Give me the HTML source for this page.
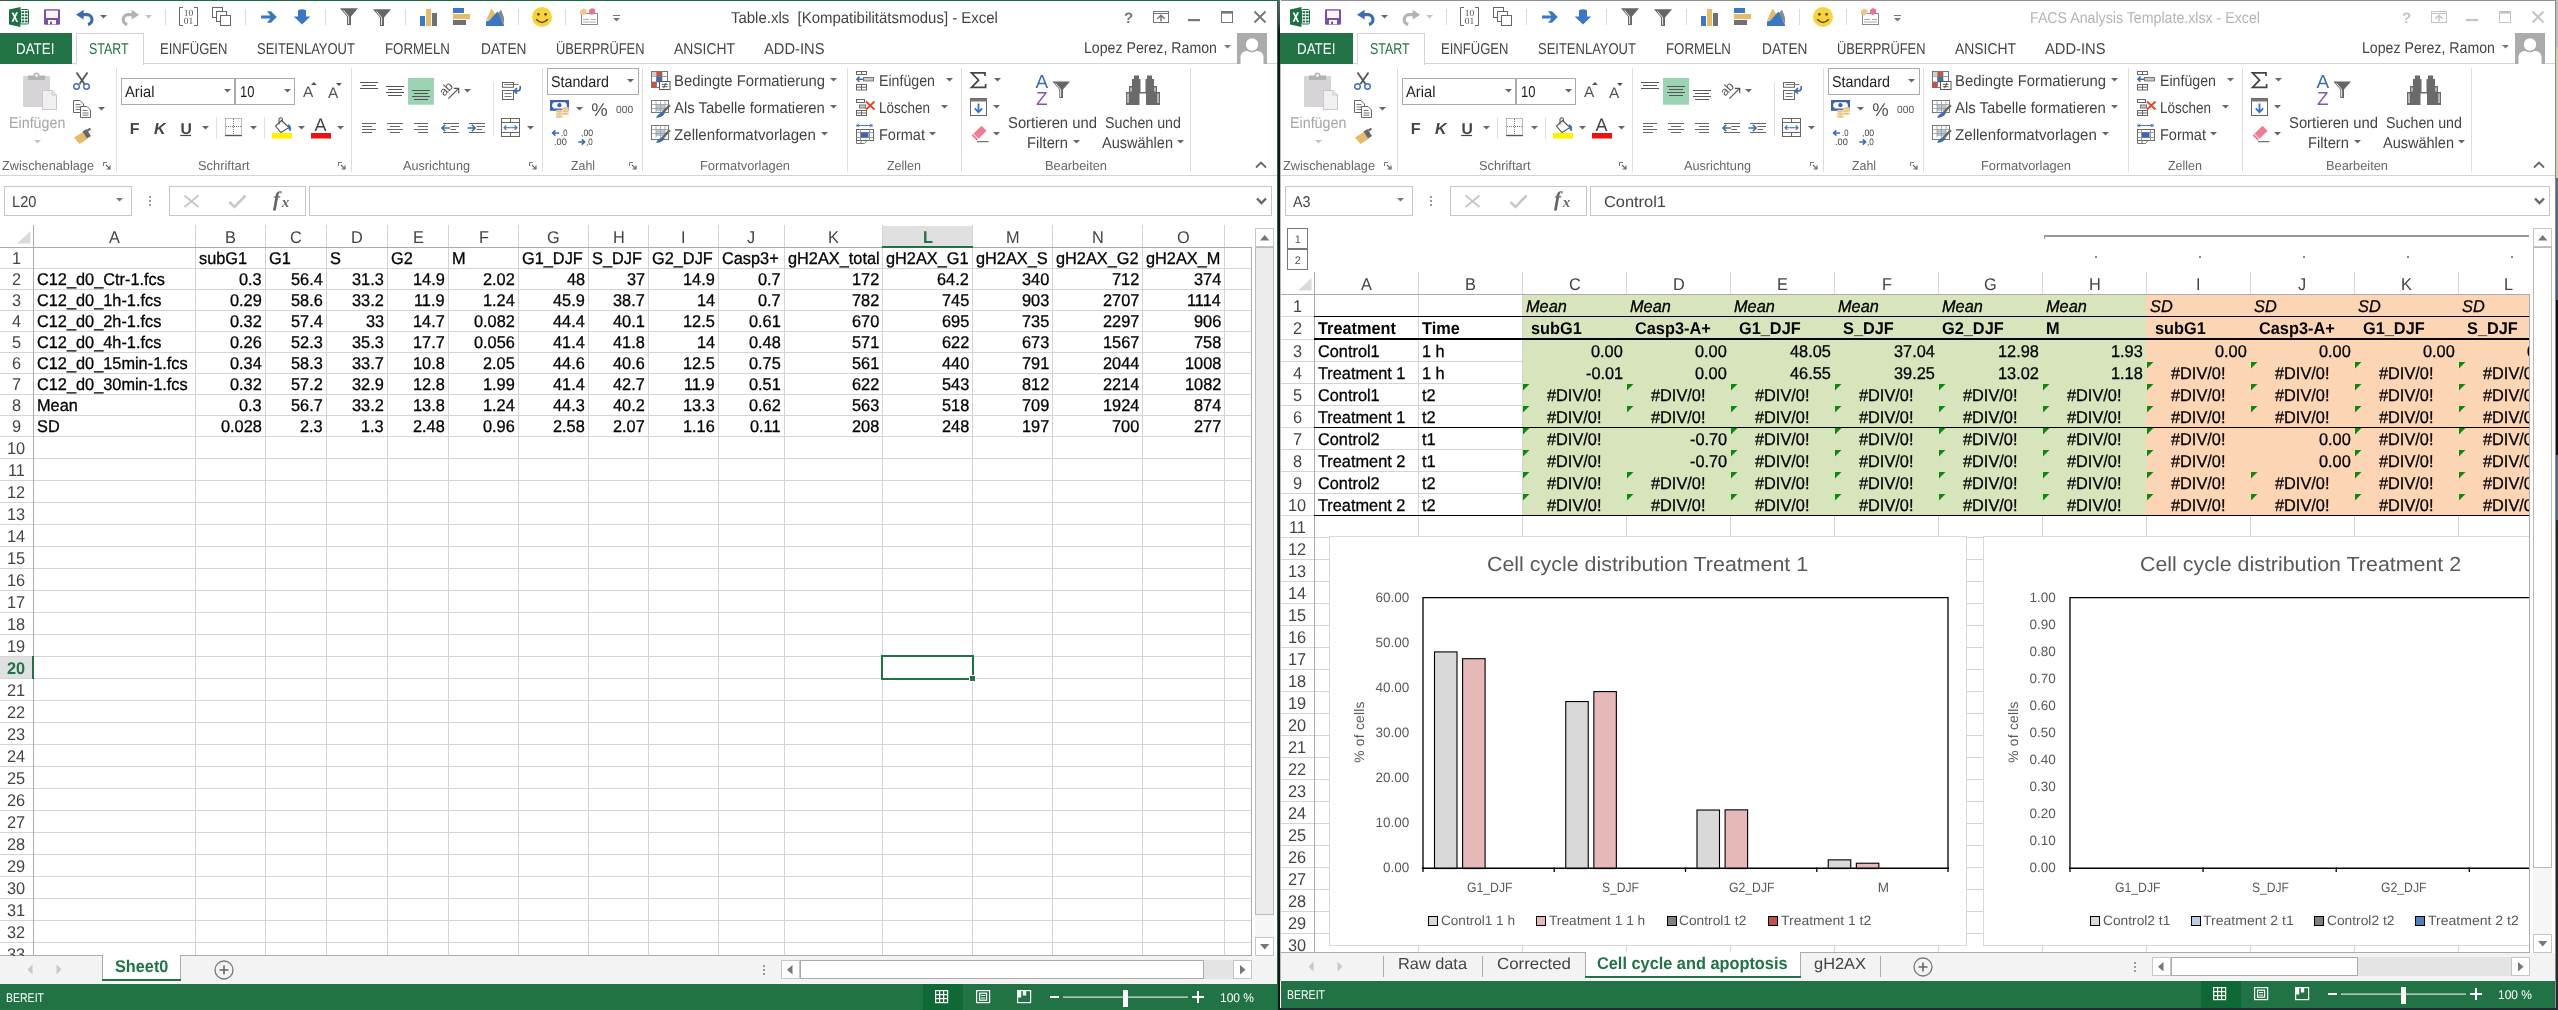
<!DOCTYPE html>
<html><head><meta charset="utf-8"><title>Excel</title><style>
html,body{margin:0;padding:0}
body{text-rendering:geometricPrecision;width:2558px;height:1010px;overflow:hidden;position:relative;background:#1f2b2c;font-family:"Liberation Sans",sans-serif;}
div,svg{position:absolute}
.t{white-space:pre;line-height:1;transform-origin:0 0;}
.k{-webkit-text-stroke:0.3px #000}
.win{overflow:hidden;background:#fff;will-change:transform}
</style></head>
<body>
<div style="left:2555px;top:0;width:3px;height:1010px;background:linear-gradient(180deg,#bdbdbd 0,#bdbdbd 47px,#c9d3a2 47px,#c9d3a2 178px,#5a7088 178px,#4a5f75 300px,#0e131b 300px,#0e131b 455px,#4f6e85 455px,#4f6e85 520px,#1d2a30 520px,#232e33 1010px)"></div>
<div class="win" style="left:0;top:0;width:1278px;height:1010px"><div style="left:0px;top:0px;width:1278px;height:1px;background:#1e6b41;"></div><svg style="left:0px;top:0px;" width="640" height="32" viewBox="0 0 640 32"><path d="M9 9.6L20.5 7V27L9 24.4Z" fill="#1d7044"/><rect x="20.5" y="9.5" width="8" height="14.5" rx="1.2" fill="#fff" stroke="#1d7044"/><rect x="21.6" y="11.2" width="2.6" height="1.9" fill="#1d7044"/><rect x="25" y="11.2" width="2.6" height="1.9" fill="#1d7044"/><rect x="21.6" y="14.3" width="2.6" height="1.9" fill="#1d7044"/><rect x="25" y="14.3" width="2.6" height="1.9" fill="#1d7044"/><rect x="21.6" y="17.4" width="2.6" height="1.9" fill="#1d7044"/><rect x="25" y="17.4" width="2.6" height="1.9" fill="#1d7044"/><rect x="21.6" y="20.5" width="2.6" height="1.9" fill="#1d7044"/><rect x="25" y="20.5" width="2.6" height="1.9" fill="#1d7044"/><path d="M11.6 12.4h1.9l1.3 2.9 1.3-3.1h1.9l-2.2 4.8 2.3 5h-1.9l-1.4-3.2-1.3 3h-1.9l2.2-4.7Z" fill="#fff"/><rect x="44" y="9.3" width="16" height="15.5" rx="1.2" fill="#7b4fa5"/><rect x="46" y="10.6" width="12" height="7.4" fill="#fbf3ff"/><rect x="48" y="20" width="8" height="4.3" fill="#fff"/><rect x="50" y="21.6" width="2" height="2.7" fill="#7b4fa5"/><path d="M76 14.7L83.6 9.8V19.6Z" fill="#3b6db0"/><path d="M82.5 14.7H87.6a4.9 4.9 0 0 1 0.3 9.7" fill="none" stroke="#3b6db0" stroke-width="3.2"/><path d="M100 15h7l-3.5 3.6Z" fill="#666"/><path d="M139.2 14.7L131.6 9.8V19.6Z" fill="#b3b3b3"/><path d="M132.7 14.7H127.6a4.9 4.9 0 0 0 -0.3 9.7" fill="none" stroke="#b3b3b3" stroke-width="3.2"/><path d="M145 15h7l-3.5 3.6Z" fill="#c4c4c4"/><rect x="165" y="9" width="1" height="16" fill="#dadada"/><rect x="245" y="9" width="1" height="16" fill="#dadada"/><rect x="325" y="9" width="1" height="16" fill="#dadada"/><rect x="405" y="9" width="1" height="16" fill="#dadada"/><rect x="518" y="9" width="1" height="16" fill="#dadada"/><rect x="565" y="9" width="1" height="16" fill="#dadada"/><path d="M183 7.5H179.5V25.5H183M194 7.5H197.5V25.5H194" fill="none" stroke="#666"/><text x="188.5" y="15.6" font-family="Liberation Serif" font-size="9.5" text-anchor="middle" fill="#555">10</text><text x="188.5" y="24" font-family="Liberation Serif" font-size="9.5" text-anchor="middle" fill="#555">01</text><rect x="212.5" y="7.5" width="10" height="10" fill="#fff" stroke="#666"/><rect x="216.5" y="11.5" width="10" height="10" fill="#fff" stroke="#666"/><rect x="220.5" y="15.5" width="10" height="10" fill="#fff" stroke="#666"/><path d="M261 15.4H270.3L267 11.3H271L276.8 17L271 22.7H267L270.3 18.6H261Z" fill="#3b78c3"/><path d="M298 10.2Q302 8.2 306 10.2V16.5H310.3L302 24.6L293.7 16.5H298Z" fill="#3b78c3"/><path d="M340 8.3H358L351 16.4V25H347V16.4Z" fill="#666"/><path d="M343.5 10.3L348.6 16.6V24" fill="none" stroke="#fff" stroke-width="0.9"/><path d="M373 9.3H391L384 17.4V26H380V17.4Z" fill="#666"/><path d="M376.5 11.3L381.6 17.6V25" fill="none" stroke="#fff" stroke-width="0.9"/><rect x="420" y="16" width="5" height="10" fill="#3b78c3"/><rect x="426" y="9" width="5" height="17" fill="#e8b96a"/><rect x="432" y="13" width="5" height="13" fill="#707070"/><rect x="453" y="8" width="11" height="5" fill="#3b78c3"/><rect x="453" y="14" width="17" height="5" fill="#e8b96a"/><rect x="453" y="20" width="13" height="5" fill="#707070"/><path d="M486 20.6L491.5 8.4L496.6 15.8L489.5 20Z" fill="#e8b96a"/><path d="M497.5 13.6L501.2 9.8L504 17.5V24Z" fill="#8a8a8a"/><path d="M486 26V21.6L489.6 20.2L497.4 11.6L504 25V26Z" fill="#3b78c3"/><circle cx="542" cy="17" r="10" fill="#f6d43a"/><circle cx="538.4" cy="14.3" r="1.4" fill="#5b4a16"/><circle cx="545.6" cy="14.3" r="1.4" fill="#5b4a16"/><path d="M536.2 19.3Q542 25.6 547.8 19.3" fill="none" stroke="#5b4a16" stroke-width="1.5"/><rect x="581.5" y="13.5" width="16" height="11" fill="#fff" stroke="#8a8a8a"/><path d="M583 19.5h6M591 19.5h5M583 22h13" stroke="#aaa"/><path d="M580 11l3-2.5 3.5 1v4l-3 2-3.5-1Z" fill="#e9c89a"/><path d="M589 10l3-2 3.2 1.6v3.4l-3.2 2-3-1.6Z" fill="#e8748f"/><path d="M613 15.5h7" stroke="#777"/><path d="M613 18h7l-3.5 3.6Z" fill="#777"/></svg><div class="t" style="left:731.2px;top:11px;font-size:15.8px;transform:scaleX(0.9472);color:#444;">Table.xls  [Kompatibilitätsmodus] - Excel</div><div class="t" style="left:1124px;top:11px;font-size:15px;font-weight:bold;color:#777;">?</div><svg style="left:0px;top:0px;" width="1277" height="32" viewBox="0 0 1277 32"><rect x="1153.5" y="11.5" width="15" height="11" fill="none" stroke="#777"/><path d="M1153.5 13.5h15" stroke="#777"/><path d="M1161 21.5V15.8M1157.3 18.8L1161 15.2L1164.7 18.8" fill="none" stroke="#777" stroke-width="1.5"/><rect x="1188" y="19" width="12" height="2.2" fill="#777"/><rect x="1221.5" y="12" width="11" height="10.5" fill="none" stroke="#777"/><rect x="1221" y="11" width="12" height="2.6" fill="#777"/><path d="M1254.5 11.5L1265.5 22.5M1265.5 11.5L1254.5 22.5" stroke="#777" stroke-width="1.9"/></svg><div style="left:0px;top:63px;width:1277px;height:1px;background:#d4d4d4;"></div><div style="left:-1px;top:33px;width:73px;height:31px;background:#217346;"></div><div class="t" style="left:15.9px;top:42px;font-size:15.7px;transform:scaleX(0.8519);color:#fff;">DATEI</div><div style="left:76px;top:33px;width:68px;height:32px;background:#fff;border:1px solid #d4d4d4;border-bottom:none;box-sizing:border-box;"></div><div class="t" style="left:89.4px;top:42px;font-size:15.7px;transform:scaleX(0.7917);color:#217346;">START</div><div class="t" style="left:159.5px;top:42px;font-size:15.7px;transform:scaleX(0.8321);color:#444;">EINFÜGEN</div><div class="t" style="left:257px;top:42px;font-size:15.7px;transform:scaleX(0.8280);color:#444;">SEITENLAYOUT</div><div class="t" style="left:385px;top:42px;font-size:15.7px;transform:scaleX(0.8468);color:#444;">FORMELN</div><div class="t" style="left:480.5px;top:42px;font-size:15.7px;transform:scaleX(0.8742);color:#444;">DATEN</div><div class="t" style="left:556px;top:42px;font-size:15.7px;transform:scaleX(0.8181);color:#444;">ÜBERPRÜFEN</div><div class="t" style="left:674px;top:42px;font-size:15.7px;transform:scaleX(0.8852);color:#444;">ANSICHT</div><div class="t" style="left:764px;top:42px;font-size:15.7px;transform:scaleX(0.9374);color:#444;">ADD-INS</div><div class="t" style="left:1084px;top:41px;font-size:15.7px;transform:scaleX(0.9018);color:#444;">Lopez Perez, Ramon</div><svg style="left:1224px;top:45px;" width="8" height="5" viewBox="0 0 8 5"><path d="M0 0h7l-3.5 3.6Z" fill="#777"/></svg><svg style="left:1237px;top:33px;" width="30" height="31" viewBox="0 0 30 31"><rect width="30" height="31" fill="#ababab"/><circle cx="15" cy="11.5" r="6.2" fill="#fff"/><path d="M3.5 31V24a6 6 0 0 1 6-6h11a6 6 0 0 1 6 6v7Z" fill="#fff"/><circle cx="15" cy="11.5" r="7.3" fill="none" stroke="#ababab" stroke-width="1.2"/></svg><div style="left:0px;top:175px;width:1277px;height:1px;background:#d4d4d4;"></div><svg style="left:0px;top:64px;" width="1277" height="112" viewBox="0 64 1277 112"><rect x="116" y="68" width="1" height="104" fill="#dedede"/><rect x="351" y="68" width="1" height="104" fill="#dedede"/><rect x="542" y="68" width="1" height="104" fill="#dedede"/><rect x="642" y="68" width="1" height="104" fill="#dedede"/><rect x="847" y="68" width="1" height="104" fill="#dedede"/><rect x="961" y="68" width="1" height="104" fill="#dedede"/><rect x="1190" y="68" width="1" height="104" fill="#dedede"/><rect x="216" y="117" width="1" height="22" fill="#e1e1e1"/><rect x="264" y="117" width="1" height="22" fill="#e1e1e1"/><rect x="493" y="82" width="1" height="54" fill="#e1e1e1"/><path d="M103.5 166V162.5H107" fill="none" stroke="#777"/><path d="M106 165L109.3 168.3M110 165.5V169H106.5" fill="none" stroke="#666" stroke-width="1.2"/><path d="M338.5 166V162.5H342" fill="none" stroke="#777"/><path d="M341 165L344.3 168.3M345 165.5V169H341.5" fill="none" stroke="#666" stroke-width="1.2"/><path d="M529.5 166V162.5H533" fill="none" stroke="#777"/><path d="M532 165L535.3 168.3M536 165.5V169H532.5" fill="none" stroke="#666" stroke-width="1.2"/><path d="M629.5 166V162.5H633" fill="none" stroke="#777"/><path d="M632 165L635.3 168.3M636 165.5V169H632.5" fill="none" stroke="#666" stroke-width="1.2"/><rect x="23" y="76" width="27" height="31" rx="1" fill="#d6d4d6"/><path d="M28 80V75.5h5.5a3 3 0 0 1 6 0H45V80Z" fill="#b4b2b4"/><circle cx="36.5" cy="75.5" r="1.4" fill="#fff"/><path d="M42.5 90.5H52L56.5 95V109.5H42.5Z" fill="#f1eff1" stroke="#c9c7c9"/><path d="M52 90.5V95H56.5" fill="none" stroke="#c9c7c9"/><path d="M34 140h7l-3.5 3.6Z" fill="#c4c4c4"/><path d="M76.5 72.5L84.5 84M87.5 72.5L79.5 84" stroke="#555" stroke-width="1.8" fill="none"/><circle cx="76.5" cy="86.5" r="2.8" fill="#fff" stroke="#3b6db0" stroke-width="1.4"/><circle cx="86.5" cy="86.5" r="2.8" fill="#fff" stroke="#3b6db0" stroke-width="1.4"/><path d="M73.5 100.5H80L83.5 104V112.5H73.5Z" fill="#fff" stroke="#666"/><path d="M75.5 104.5h5M75.5 107h6M75.5 109.5h6" stroke="#777"/><path d="M80.5 106.5H87L90.5 110V117.5H80.5Z" fill="#fff" stroke="#666"/><path d="M82.5 110.5h5M82.5 113h6M82.5 115.2h6" stroke="#777"/><path d="M98 107h7l-3.5 3.6Z" fill="#666"/><path d="M74 137.5L83 132L87.5 139L79.5 144Z" fill="#e8b96a"/><path d="M82.5 131.5L86.5 129L91 136L87 138.5Z" fill="#666"/><path d="M87.5 130.5L90.5 128.6" stroke="#666" stroke-width="2.2"/><rect x="121.5" y="78.5" width="113" height="26" fill="#fff" stroke="#ababab"/><rect x="235.5" y="78.5" width="59" height="26" fill="#fff" stroke="#ababab"/><path d="M224 89h7l-3.5 3.6Z" fill="#666"/><path d="M284 89h7l-3.5 3.6Z" fill="#666"/><path d="M311 85l2.9-3.1 2.9 3.1Z" fill="#40526b"/><path d="M336 83l2.9 2.9 2.9-2.9Z" fill="#40526b"/><path d="M180.2 135.5H191.1" stroke="#444" stroke-width="1.2"/><path d="M202 126h7l-3.5 3.6Z" fill="#666"/><path d="M225.5 118.5H241.5V134M225.5 118.5V134M233.5 119V134M226 126.5H241" fill="none" stroke="#777" stroke-dasharray="1 1"/><path d="M225 135.5H242" stroke="#555" stroke-width="1.4"/><path d="M250 126h7l-3.5 3.6Z" fill="#666"/><rect x="272" y="133" width="20" height="5.5" fill="#fff200"/><path d="M281.5 120.5L289 127.5L281 132.5L275.5 126Z" fill="#fff" stroke="#555" stroke-width="1.1"/><path d="M279 124.5V119.5a1.7 1.7 0 0 1 3.4 0V122" fill="none" stroke="#555" stroke-width="1.1"/><path d="M288.5 124.5Q291.8 126.5 290.3 131Q288 129.5 288.5 124.5Z" fill="#3b6db0" stroke="#3b6db0" stroke-width=".8"/><path d="M298 126h7l-3.5 3.6Z" fill="#666"/><rect x="311" y="133" width="20" height="5.5" fill="#ee1111"/><path d="M337 126h7l-3.5 3.6Z" fill="#666"/><rect x="408" y="78" width="26" height="26.7" fill="#9cd3b3"/><path d="M360 82.5H378" stroke="#555" stroke-width="1"/><path d="M362 85.5H376" stroke="#555" stroke-width="1"/><path d="M360 88.5H378" stroke="#555" stroke-width="1"/><path d="M386 86.5H404" stroke="#555" stroke-width="1"/><path d="M388 89.5H402" stroke="#555" stroke-width="1"/><path d="M386 92.5H404" stroke="#555" stroke-width="1"/><path d="M388 95.5H402" stroke="#555" stroke-width="1"/><path d="M412 90.5H430" stroke="#555" stroke-width="1"/><path d="M414 93.5H428" stroke="#555" stroke-width="1"/><path d="M412 96.5H430" stroke="#555" stroke-width="1"/><path d="M414 99.5H428" stroke="#555" stroke-width="1"/><text transform="translate(444.3,96.8) rotate(-47)" font-family="Liberation Sans" font-size="12.5" fill="#555">ab</text><path d="M448.4 98.6L458.2 88.8M453.8 88.3H458.7V93.2" fill="none" stroke="#555" stroke-width="1.2"/><path d="M464 89h7l-3.5 3.6Z" fill="#666"/><rect x="502.5" y="82.5" width="11" height="4.8" fill="#fff" stroke="#666"/><rect x="502.5" y="90.5" width="11" height="9" fill="#fff" stroke="#666"/><path d="M504.5 93.5h7M504.5 96.5h7M504.5 84.5h14" stroke="#777"/><path d="M520.2 86V88.3a2.6 2.6 0 0 1 -2.6 2.6H514.6M517 88.2l-2.9 2.7 2.9 2.7" fill="none" stroke="#3b6db0" stroke-width="1.6"/><path d="M362 123.5H376" stroke="#666" stroke-width="1"/><path d="M362 126.5H372" stroke="#666" stroke-width="1"/><path d="M362 129.5H376" stroke="#666" stroke-width="1"/><path d="M362 132.5H372" stroke="#666" stroke-width="1"/><path d="M387 123.5H403" stroke="#666" stroke-width="1"/><path d="M390 126.5H400" stroke="#666" stroke-width="1"/><path d="M387 129.5H403" stroke="#666" stroke-width="1"/><path d="M390 132.5H400" stroke="#666" stroke-width="1"/><path d="M414 123.5H428" stroke="#666" stroke-width="1"/><path d="M418 126.5H428" stroke="#666" stroke-width="1"/><path d="M414 129.5H428" stroke="#666" stroke-width="1"/><path d="M418 132.5H428" stroke="#666" stroke-width="1"/><path d="M443 123.5H459" stroke="#666" stroke-width="1"/><path d="M450.5 126.5H459" stroke="#666" stroke-width="1"/><path d="M450.5 129.5H456" stroke="#666" stroke-width="1"/><path d="M443 132.5H459" stroke="#666" stroke-width="1"/><path d="M442 128h8M445.3 124.8L442 128l3.3 3.2" fill="none" stroke="#3b6db0" stroke-width="1.6"/><path d="M469 123.5H485" stroke="#666" stroke-width="1"/><path d="M476.5 126.5H485" stroke="#666" stroke-width="1"/><path d="M476.5 129.5H482" stroke="#666" stroke-width="1"/><path d="M469 132.5H485" stroke="#666" stroke-width="1"/><path d="M467.5 128h7.5M471.8 124.8l3.3 3.2-3.3 3.2" fill="none" stroke="#3b6db0" stroke-width="1.6"/><rect x="501.5" y="118.5" width="18" height="18" fill="#fff" stroke="#666"/><path d="M501.5 122.5h18M501.5 132.5h18M510.5 118.5V122.5M510.5 132.5V136.5" stroke="#666"/><path d="M504 127.7h13M506.3 125.5L504 127.7l2.3 2.2M514.7 125.5l2.3 2.2-2.3 2.2" fill="none" stroke="#3b6db0" stroke-width="1.1"/><path d="M527 126h7l-3.5 3.6Z" fill="#666"/><rect x="547.5" y="68.5" width="91" height="26" fill="#fff" stroke="#ababab"/><path d="M627 79h7l-3.5 3.6Z" fill="#666"/><rect x="550" y="100" width="19" height="10.8" fill="#3d62a8"/><path d="M552.2 103.5h1.2v-1.2h12.2v1.2h1.2v3.8h-1.2v1.2h-12.2v-1.2h-1.2Z" fill="#fff"/><circle cx="559.4" cy="105.2" r="2.1" fill="#3d62a8"/><ellipse cx="559.3" cy="116.5" rx="3.6" ry="1.5" fill="#e8c27a" stroke="#fff" stroke-width=".5"/><ellipse cx="559.3" cy="114" rx="3.6" ry="1.5" fill="#e8c27a" stroke="#fff" stroke-width=".5"/><ellipse cx="559.3" cy="111.5" rx="3.6" ry="1.5" fill="#e8c27a" stroke="#fff" stroke-width=".5"/><ellipse cx="565.3" cy="113.5" rx="3.6" ry="1.5" fill="#e8c27a" stroke="#fff" stroke-width=".5"/><ellipse cx="565.3" cy="111" rx="3.6" ry="1.5" fill="#e8c27a" stroke="#fff" stroke-width=".5"/><ellipse cx="565.3" cy="108.5" rx="3.6" ry="1.5" fill="#e8c27a" stroke="#fff" stroke-width=".5"/><path d="M576 107h7l-3.5 3.6Z" fill="#666"/><path d="M552.6 133h6.6M555.4 130.3l-2.8 2.7 2.8 2.7" fill="none" stroke="#3b6db0" stroke-width="1.6"/><path d="M578.3 142h6M581.8 139.3l2.8 2.7-2.8 2.7" fill="none" stroke="#3b6db0" stroke-width="1.6"/><rect x="651.5" y="71.5" width="16" height="16" fill="#fff" stroke="#777"/><path d="M651.5 76.5h16M651.5 82h16M656.5 71.5v16M662 71.5v16" stroke="#999"/><rect x="652" y="72" width="4.5" height="4.5" fill="#d0d0d0"/><rect x="656.5" y="72" width="5.5" height="4.5" fill="#c9513f"/><rect x="656.5" y="76.5" width="5.5" height="5.5" fill="#3b6db0"/><rect x="652" y="82" width="4.5" height="5.5" fill="#c9513f"/><rect x="659.5" y="81.5" width="10.5" height="8" fill="#fff" stroke="#555"/><path d="M662 84.3h5.5M662 86.7h5.5M666 82.8l-2.4 5.4" stroke="#444" stroke-width=".9"/><rect x="651.5" y="100.5" width="17" height="12" fill="#fff" stroke="#777"/><rect x="656" y="104.5" width="9" height="6.5" fill="#b8c7dd"/><path d="M651.5 104.5h17M651.5 108.5h17M656 100.5v12M660.5 100.5v12M665 100.5v12" stroke="#999" stroke-width=".8"/><path d="M669.8 105.2L662 113.3" stroke="#666" stroke-width="2.4"/><path d="M663 112Q658.5 113 656 117.5Q661.5 118.5 664.8 113.6Z" fill="#3b6db0"/><rect x="651.5" y="125.5" width="17" height="14" fill="#fff" stroke="#777"/><rect x="656" y="129.5" width="9" height="6.5" fill="#b8c7dd"/><path d="M651.5 129.5h17M651.5 133.5h17M656 125.5v12M660.5 125.5v12M665 125.5v12" stroke="#999" stroke-width=".8"/><path d="M669.8 130.2L662 138.3" stroke="#666" stroke-width="2.4"/><path d="M663 137Q658.5 138 656 142.5Q661.5 143.5 664.8 138.6Z" fill="#3b6db0"/><rect x="856.5" y="71.5" width="10" height="3" fill="#fff" stroke="#666"/><path d="M861.5 71.5v3" stroke="#666"/><rect x="863.5" y="77.5" width="10" height="3.4" fill="#c5c9cf" stroke="#777"/><path d="M857 79.2h6M859.5 76.6l-2.6 2.6 2.6 2.6" fill="none" stroke="#3b6db0" stroke-width="1.5"/><rect x="856.5" y="84.5" width="10" height="5.5" fill="#fff" stroke="#666"/><path d="M861.5 84.5v5.5M856.5 87.2h10" stroke="#666"/><rect x="856.5" y="99.5" width="8" height="3" fill="#fff" stroke="#666"/><rect x="859.5" y="105" width="6" height="3" fill="#c9c9c9" stroke="#777"/><rect x="856.5" y="110.5" width="10" height="5" fill="#fff" stroke="#666"/><path d="M861.5 110.5v5M856.5 113h10" stroke="#666"/><path d="M866 101.5l8.5 8M874.5 101.5l-8.5 8" stroke="#e0492e" stroke-width="1.9"/><path d="M857 125.5h15M857 123.8v3.4M872 123.8v3.4M859.3 124l-1.8 1.5 1.8 1.5M869.7 124l1.8 1.5-1.8 1.5" fill="none" stroke="#3b6db0" stroke-width=".9"/><rect x="856.5" y="129.5" width="17" height="11" fill="#fff" stroke="#666"/><path d="M860.5 129.5v11M869.5 129.5v11M856.5 132.5h17M856.5 137.5h17" stroke="#999"/><rect x="861" y="132.5" width="7.5" height="5" fill="#3f65b0"/><path d="M856.5 140.5v3h8l2.5-3M861 140.5v3" fill="none" stroke="#777"/><path d="M946 78h7l-3.5 3.6Z" fill="#666"/><path d="M941 105h7l-3.5 3.6Z" fill="#666"/><path d="M929 132h7l-3.5 3.6Z" fill="#666"/><path d="M830 78h7l-3.5 3.6Z" fill="#666"/><path d="M830 105h7l-3.5 3.6Z" fill="#666"/><path d="M821 132h7l-3.5 3.6Z" fill="#666"/><path d="M985 76V72.8H971.5L978.6 80.2L971.5 87.4H985.6V84" fill="none" stroke="#444" stroke-width="1.7"/><path d="M994 78h7l-3.5 3.6Z" fill="#666"/><rect x="970.5" y="98.5" width="16" height="17" fill="#fff" stroke="#666"/><rect x="970.5" y="98.5" width="16" height="3" fill="#777"/><path d="M978.5 103.5v8.5M974.8 108.3l3.7 3.9 3.7-3.9" fill="none" stroke="#2f75c4" stroke-width="1.8"/><path d="M993 105h7l-3.5 3.6Z" fill="#666"/><path d="M971.6 135.5L981.5 125.7L986.6 130.8L976.7 140.6Z" fill="#ee7d92"/><path d="M973.2 133.7L978.4 139" stroke="#fff" stroke-width="1"/><path d="M977 141.7h11.5" stroke="#555"/><path d="M993 132h7l-3.5 3.6Z" fill="#666"/><path d="M1052.4 81.6H1070L1063 89.5V98H1059.3V89.5Z" fill="#666"/><path d="M1055.5 83.3L1060.6 89.5V97" fill="none" stroke="#fff" stroke-width=".9"/><path d="M1073 140h7l-3.5 3.6Z" fill="#666"/><path d="M1177 140h7l-3.5 3.6Z" fill="#666"/><path d="M1126 105V92h3v-6h3v-7h2v-3.5h5V79h1.5v13h5V79h1.5v-3.5h5V79h2v7h3v6h3v13h-14V93.5h-6.5V105Z" fill="#6a6a6a"/><path d="M1128 93.5V103M1158 93.5V103M1131 87.5v4M1155 87.5v4" stroke="#fff" stroke-width="1"/><path d="M1141.2 88.5h3.6" stroke="#fff" stroke-width="1.2"/></svg><div class="t" style="left:9px;top:116px;font-size:15.7px;transform:scaleX(0.9099);color:#a6a6a6;">Einfügen</div><div class="t" style="left:2px;top:159px;font-size:13px;transform:scaleX(0.9792);color:#666;">Zwischenablage</div><div class="t" style="left:198px;top:159px;font-size:13px;transform:scaleX(0.9901);color:#666;">Schriftart</div><div class="t" style="left:403px;top:159px;font-size:13px;transform:scaleX(0.9759);color:#666;">Ausrichtung</div><div class="t" style="left:571px;top:159px;font-size:13px;transform:scaleX(0.9492);color:#666;">Zahl</div><div class="t" style="left:700px;top:159px;font-size:13px;transform:scaleX(0.9886);color:#666;">Formatvorlagen</div><div class="t" style="left:887px;top:159px;font-size:13px;transform:scaleX(0.9601);color:#666;">Zellen</div><div class="t" style="left:1045px;top:159px;font-size:13px;transform:scaleX(0.9860);color:#666;">Bearbeiten</div><div class="t" style="left:124.5px;top:85px;font-size:15.7px;transform:scaleX(0.9390);color:#222;">Arial</div><div class="t" style="left:239.5px;top:85px;font-size:15.7px;transform:scaleX(0.8305);color:#222;">10</div><div class="t" style="left:303.1px;top:85px;font-size:15.4px;color:#555;">A</div><div class="t" style="left:328px;top:86px;font-size:15.4px;color:#555;">A</div><div class="t" style="left:129.7px;top:122px;font-size:16px;font-weight:bold;color:#444;">F</div><div class="t" style="left:154px;top:122px;font-size:16px;font-weight:bold;font-style:italic;color:#444;">K</div><div class="t" style="left:180.6px;top:122px;font-size:15.7px;font-weight:bold;color:#444;">U</div><div class="t" style="left:314.5px;top:116px;font-size:18px;color:#444;">A</div><div class="t" style="left:551px;top:75px;font-size:15.7px;transform:scaleX(0.9101);color:#222;">Standard</div><div class="t" style="left:591.3px;top:101px;font-size:18.5px;color:#555;">%</div><div class="t" style="left:615.9px;top:105px;font-size:10.5px;transform:scaleX(0.9764);color:#555;">000</div><div class="t" style="left:560.6px;top:129px;font-size:9.3px;transform:scaleX(0.8251);color:#444;">.0</div><div class="t" style="left:554.2px;top:138px;font-size:9.3px;transform:scaleX(0.9902);color:#444;">.00</div><div class="t" style="left:581px;top:129px;font-size:9.3px;transform:scaleX(0.9360);color:#444;">,00</div><div class="t" style="left:586.4px;top:138px;font-size:9.3px;transform:scaleX(0.8638);color:#444;">,0</div><div class="t" style="left:674px;top:74px;font-size:15.7px;transform:scaleX(0.9455);color:#444;">Bedingte Formatierung</div><div class="t" style="left:674px;top:101px;font-size:15.7px;transform:scaleX(0.9473);color:#444;">Als Tabelle formatieren</div><div class="t" style="left:674px;top:128px;font-size:15.7px;transform:scaleX(0.9628);color:#444;">Zellenformatvorlagen</div><div class="t" style="left:879px;top:74px;font-size:15.7px;transform:scaleX(0.9035);color:#444;">Einfügen</div><div class="t" style="left:879px;top:101px;font-size:15.7px;transform:scaleX(0.8591);color:#444;">Löschen</div><div class="t" style="left:879px;top:128px;font-size:15.7px;transform:scaleX(0.9251);color:#444;">Format</div><div class="t" style="left:1008px;top:116px;font-size:15.7px;transform:scaleX(0.9442);color:#444;">Sortieren und</div><div class="t" style="left:1027px;top:136px;font-size:15.7px;transform:scaleX(0.9401);color:#444;">Filtern</div><div class="t" style="left:1105px;top:116px;font-size:15.7px;transform:scaleX(0.9068);color:#444;">Suchen und</div><div class="t" style="left:1102px;top:136px;font-size:15.7px;transform:scaleX(0.9244);color:#444;">Auswählen</div><div class="t" style="left:1035.5px;top:73px;font-size:19px;color:#3b6db0;">A</div><div class="t" style="left:1036px;top:90px;font-size:19px;color:#8a54a2;">Z</div><svg style="left:1255px;top:161px;" width="12" height="8" viewBox="0 0 12 8"><path d="M1 6.5L6 1.5L11 6.5" fill="none" stroke="#666" stroke-width="1.8"/></svg><div style="left:4px;top:186px;width:128px;height:30px;background:#fff;border:1px solid #c6c6c6;box-sizing:border-box;"></div><div class="t" style="left:12px;top:195px;font-size:15.7px;transform:scaleX(0.9356);color:#444;">L20</div><svg style="left:116px;top:198px;" width="8" height="5" viewBox="0 0 8 5"><path d="M0 0h7l-3.5 3.6Z" fill="#777"/></svg><svg style="left:149px;top:195px;" width="3" height="13" viewBox="0 0 3 13"><rect x="0" y="1" width="2" height="2" fill="#999"/><rect x="0" y="5" width="2" height="2" fill="#999"/><rect x="0" y="9" width="2" height="2" fill="#999"/></svg><div style="left:169px;top:186px;width:137px;height:30px;background:#fff;border:1px solid #c6c6c6;box-sizing:border-box;"></div><svg style="left:180px;top:190px;" width="120" height="22" viewBox="0 0 120 22"><path d="M4.5 5.5L18.5 17M18.5 5.5L4.5 17" stroke="#c9c9c9" stroke-width="2"/><path d="M49.5 12L54.5 17L65.5 5.5" fill="none" stroke="#c9c9c9" stroke-width="2.6"/></svg><div class="t" style="left:273px;top:189px;font-size:21px;font-weight:bold;font-style:italic;font-family:'Liberation Serif',serif;color:#666;">f</div><div class="t" style="left:281.69px;top:196px;font-size:15px;font-weight:bold;font-style:italic;font-family:'Liberation Serif',serif;color:#666;">x</div><div style="left:309px;top:186px;width:963px;height:30px;background:#fff;border:1px solid #c6c6c6;box-sizing:border-box;"></div><svg style="left:1256px;top:197px;" width="11" height="8" viewBox="0 0 11 8"><path d="M1 1.5L5.5 6L10 1.5" fill="none" stroke="#666" stroke-width="2.4"/></svg><div style="left:0px;top:225px;width:1251px;height:730px;background:#fff;"></div><div style="left:0px;top:268px;width:1251px;height:1px;background:#d4d4d4;"></div><div style="left:0px;top:289px;width:1251px;height:1px;background:#d4d4d4;"></div><div style="left:0px;top:310px;width:1251px;height:1px;background:#d4d4d4;"></div><div style="left:0px;top:331px;width:1251px;height:1px;background:#d4d4d4;"></div><div style="left:0px;top:352px;width:1251px;height:1px;background:#d4d4d4;"></div><div style="left:0px;top:373px;width:1251px;height:1px;background:#d4d4d4;"></div><div style="left:0px;top:394px;width:1251px;height:1px;background:#d4d4d4;"></div><div style="left:0px;top:415px;width:1251px;height:1px;background:#d4d4d4;"></div><div style="left:0px;top:436px;width:1251px;height:1px;background:#d4d4d4;"></div><div style="left:0px;top:458px;width:1251px;height:1px;background:#d4d4d4;"></div><div style="left:0px;top:480px;width:1251px;height:1px;background:#d4d4d4;"></div><div style="left:0px;top:502px;width:1251px;height:1px;background:#d4d4d4;"></div><div style="left:0px;top:524px;width:1251px;height:1px;background:#d4d4d4;"></div><div style="left:0px;top:546px;width:1251px;height:1px;background:#d4d4d4;"></div><div style="left:0px;top:568px;width:1251px;height:1px;background:#d4d4d4;"></div><div style="left:0px;top:590px;width:1251px;height:1px;background:#d4d4d4;"></div><div style="left:0px;top:612px;width:1251px;height:1px;background:#d4d4d4;"></div><div style="left:0px;top:634px;width:1251px;height:1px;background:#d4d4d4;"></div><div style="left:0px;top:656px;width:1251px;height:1px;background:#d4d4d4;"></div><div style="left:0px;top:678px;width:1251px;height:1px;background:#d4d4d4;"></div><div style="left:0px;top:700px;width:1251px;height:1px;background:#d4d4d4;"></div><div style="left:0px;top:722px;width:1251px;height:1px;background:#d4d4d4;"></div><div style="left:0px;top:744px;width:1251px;height:1px;background:#d4d4d4;"></div><div style="left:0px;top:766px;width:1251px;height:1px;background:#d4d4d4;"></div><div style="left:0px;top:788px;width:1251px;height:1px;background:#d4d4d4;"></div><div style="left:0px;top:810px;width:1251px;height:1px;background:#d4d4d4;"></div><div style="left:0px;top:832px;width:1251px;height:1px;background:#d4d4d4;"></div><div style="left:0px;top:854px;width:1251px;height:1px;background:#d4d4d4;"></div><div style="left:0px;top:876px;width:1251px;height:1px;background:#d4d4d4;"></div><div style="left:0px;top:898px;width:1251px;height:1px;background:#d4d4d4;"></div><div style="left:0px;top:920px;width:1251px;height:1px;background:#d4d4d4;"></div><div style="left:0px;top:942px;width:1251px;height:1px;background:#d4d4d4;"></div><div style="left:195px;top:225px;width:1px;height:730px;background:#d4d4d4;"></div><div style="left:265px;top:225px;width:1px;height:730px;background:#d4d4d4;"></div><div style="left:326px;top:225px;width:1px;height:730px;background:#d4d4d4;"></div><div style="left:387px;top:225px;width:1px;height:730px;background:#d4d4d4;"></div><div style="left:448px;top:225px;width:1px;height:730px;background:#d4d4d4;"></div><div style="left:518px;top:225px;width:1px;height:730px;background:#d4d4d4;"></div><div style="left:588px;top:225px;width:1px;height:730px;background:#d4d4d4;"></div><div style="left:648px;top:225px;width:1px;height:730px;background:#d4d4d4;"></div><div style="left:718px;top:225px;width:1px;height:730px;background:#d4d4d4;"></div><div style="left:784px;top:225px;width:1px;height:730px;background:#d4d4d4;"></div><div style="left:882px;top:225px;width:1px;height:730px;background:#d4d4d4;"></div><div style="left:972px;top:225px;width:1px;height:730px;background:#d4d4d4;"></div><div style="left:1052px;top:225px;width:1px;height:730px;background:#d4d4d4;"></div><div style="left:1142px;top:225px;width:1px;height:730px;background:#d4d4d4;"></div><div style="left:1224px;top:225px;width:1px;height:730px;background:#d4d4d4;"></div><div style="left:1251px;top:247px;width:1px;height:708px;background:#ababab;"></div><div style="left:0px;top:247px;width:1252px;height:1px;background:#ababab;"></div><div style="left:33px;top:225px;width:1px;height:730px;background:#ababab;"></div><div style="left:0px;top:955px;width:1252px;height:1px;background:#ababab;"></div><svg style="left:17px;top:231px;" width="14" height="13" viewBox="0 0 14 13"><path d="M13.5 0V12.5H0Z" fill="#dadada"/></svg><div style="left:883px;top:226px;width:89px;height:20px;background:#e0e0e0;"></div><div style="left:882px;top:246px;width:91px;height:2px;background:#217346;"></div><div style="left:0px;top:657px;width:32px;height:21px;background:#e1e1e1;"></div><div style="left:32px;top:656px;width:2px;height:23px;background:#217346;"></div><div class="t" style="left:109.06px;top:229px;font-size:17px;transform:scaleX(0.9600);color:#444;">A</div><div class="t" style="left:225.06px;top:229px;font-size:17px;transform:scaleX(0.9600);color:#444;">B</div><div class="t" style="left:290.11px;top:229px;font-size:17px;transform:scaleX(0.9600);color:#444;">C</div><div class="t" style="left:351.11px;top:229px;font-size:17px;transform:scaleX(0.9600);color:#444;">D</div><div class="t" style="left:412.56px;top:229px;font-size:17px;transform:scaleX(0.9600);color:#444;">E</div><div class="t" style="left:478.51px;top:229px;font-size:17px;transform:scaleX(0.9600);color:#444;">F</div><div class="t" style="left:547.15px;top:229px;font-size:17px;transform:scaleX(0.9600);color:#444;">G</div><div class="t" style="left:612.61px;top:229px;font-size:17px;transform:scaleX(0.9600);color:#444;">H</div><div class="t" style="left:681.23px;top:229px;font-size:17px;transform:scaleX(0.9600);color:#444;">I</div><div class="t" style="left:747.42px;top:229px;font-size:17px;transform:scaleX(0.9600);color:#444;">J</div><div class="t" style="left:828.06px;top:229px;font-size:17px;transform:scaleX(0.9600);color:#444;">K</div><div class="t" style="left:922.51px;top:229px;font-size:17px;font-weight:bold;transform:scaleX(0.9600);color:#217346;">L</div><div class="t" style="left:1005.7px;top:229px;font-size:17px;transform:scaleX(0.9600);color:#444;">M</div><div class="t" style="left:1091.61px;top:229px;font-size:17px;transform:scaleX(0.9600);color:#444;">N</div><div class="t" style="left:1177.15px;top:229px;font-size:17px;transform:scaleX(0.9600);color:#444;">O</div><div class="t" style="left:11.76px;top:250px;font-size:17px;transform:scaleX(0.9600);color:#444;">1</div><div class="t" style="left:11.76px;top:271px;font-size:17px;transform:scaleX(0.9600);color:#444;">2</div><div class="t" style="left:11.76px;top:292px;font-size:17px;transform:scaleX(0.9600);color:#444;">3</div><div class="t" style="left:11.76px;top:313px;font-size:17px;transform:scaleX(0.9600);color:#444;">4</div><div class="t" style="left:11.76px;top:334px;font-size:17px;transform:scaleX(0.9600);color:#444;">5</div><div class="t" style="left:11.76px;top:355px;font-size:17px;transform:scaleX(0.9600);color:#444;">6</div><div class="t" style="left:11.76px;top:376px;font-size:17px;transform:scaleX(0.9600);color:#444;">7</div><div class="t" style="left:11.76px;top:397px;font-size:17px;transform:scaleX(0.9600);color:#444;">8</div><div class="t" style="left:11.76px;top:418px;font-size:17px;transform:scaleX(0.9600);color:#444;">9</div><div class="t" style="left:7.23px;top:440px;font-size:17px;transform:scaleX(0.9600);color:#444;">10</div><div class="t" style="left:7.83px;top:462px;font-size:17px;transform:scaleX(0.9600);color:#444;">11</div><div class="t" style="left:7.23px;top:484px;font-size:17px;transform:scaleX(0.9600);color:#444;">12</div><div class="t" style="left:7.23px;top:506px;font-size:17px;transform:scaleX(0.9600);color:#444;">13</div><div class="t" style="left:7.23px;top:528px;font-size:17px;transform:scaleX(0.9600);color:#444;">14</div><div class="t" style="left:7.23px;top:550px;font-size:17px;transform:scaleX(0.9600);color:#444;">15</div><div class="t" style="left:7.23px;top:572px;font-size:17px;transform:scaleX(0.9600);color:#444;">16</div><div class="t" style="left:7.23px;top:594px;font-size:17px;transform:scaleX(0.9600);color:#444;">17</div><div class="t" style="left:7.23px;top:616px;font-size:17px;transform:scaleX(0.9600);color:#444;">18</div><div class="t" style="left:7.23px;top:638px;font-size:17px;transform:scaleX(0.9600);color:#444;">19</div><div class="t" style="left:7.13px;top:660px;font-size:17px;font-weight:bold;transform:scaleX(0.9600);color:#217346;">20</div><div class="t" style="left:7.23px;top:682px;font-size:17px;transform:scaleX(0.9600);color:#444;">21</div><div class="t" style="left:7.23px;top:704px;font-size:17px;transform:scaleX(0.9600);color:#444;">22</div><div class="t" style="left:7.23px;top:726px;font-size:17px;transform:scaleX(0.9600);color:#444;">23</div><div class="t" style="left:7.23px;top:748px;font-size:17px;transform:scaleX(0.9600);color:#444;">24</div><div class="t" style="left:7.23px;top:770px;font-size:17px;transform:scaleX(0.9600);color:#444;">25</div><div class="t" style="left:7.23px;top:792px;font-size:17px;transform:scaleX(0.9600);color:#444;">26</div><div class="t" style="left:7.23px;top:814px;font-size:17px;transform:scaleX(0.9600);color:#444;">27</div><div class="t" style="left:7.23px;top:836px;font-size:17px;transform:scaleX(0.9600);color:#444;">28</div><div class="t" style="left:7.23px;top:858px;font-size:17px;transform:scaleX(0.9600);color:#444;">29</div><div class="t" style="left:7.23px;top:880px;font-size:17px;transform:scaleX(0.9600);color:#444;">30</div><div class="t" style="left:7.23px;top:902px;font-size:17px;transform:scaleX(0.9600);color:#444;">31</div><div class="t" style="left:7.23px;top:924px;font-size:17px;transform:scaleX(0.9600);color:#444;">32</div><div class="t" style="left:7.23px;top:946px;font-size:17px;transform:scaleX(0.9600);color:#444;">33</div><div class="t k" style="left:199px;top:250px;font-size:17px;transform:scaleX(0.9600);color:#000;">subG1</div><div class="t k" style="left:269px;top:250px;font-size:17px;transform:scaleX(0.9600);color:#000;">G1</div><div class="t k" style="left:330px;top:250px;font-size:17px;transform:scaleX(0.9600);color:#000;">S</div><div class="t k" style="left:391px;top:250px;font-size:17px;transform:scaleX(0.9600);color:#000;">G2</div><div class="t k" style="left:452px;top:250px;font-size:17px;transform:scaleX(0.9600);color:#000;">M</div><div class="t k" style="left:522px;top:250px;font-size:17px;transform:scaleX(0.9600);color:#000;">G1_DJF</div><div class="t k" style="left:592px;top:250px;font-size:17px;transform:scaleX(0.9600);color:#000;">S_DJF</div><div class="t k" style="left:652px;top:250px;font-size:17px;transform:scaleX(0.9600);color:#000;">G2_DJF</div><div class="t k" style="left:722px;top:250px;font-size:17px;transform:scaleX(0.9600);color:#000;">Casp3+</div><div class="t k" style="left:788px;top:250px;font-size:17px;transform:scaleX(0.9600);color:#000;">gH2AX_total</div><div class="t k" style="left:886px;top:250px;font-size:17px;transform:scaleX(0.9600);color:#000;">gH2AX_G1</div><div class="t k" style="left:976px;top:250px;font-size:17px;transform:scaleX(0.9600);color:#000;">gH2AX_S</div><div class="t k" style="left:1056px;top:250px;font-size:17px;transform:scaleX(0.9600);color:#000;">gH2AX_G2</div><div class="t k" style="left:1146px;top:250px;font-size:17px;transform:scaleX(0.9600);color:#000;">gH2AX_M</div><div class="t k" style="left:37px;top:271px;font-size:17px;transform:scaleX(0.9600);color:#000;">C12_d0_Ctr-1.fcs</div><div class="t k" style="left:239.31px;top:271px;font-size:17px;transform:scaleX(0.9600);color:#000;">0.3</div><div class="t k" style="left:291.24px;top:271px;font-size:17px;transform:scaleX(0.9600);color:#000;">56.4</div><div class="t k" style="left:352.24px;top:271px;font-size:17px;transform:scaleX(0.9600);color:#000;">31.3</div><div class="t k" style="left:413.24px;top:271px;font-size:17px;transform:scaleX(0.9600);color:#000;">14.9</div><div class="t k" style="left:483.24px;top:271px;font-size:17px;transform:scaleX(0.9600);color:#000;">2.02</div><div class="t k" style="left:566.85px;top:271px;font-size:17px;transform:scaleX(0.9600);color:#000;">48</div><div class="t k" style="left:626.85px;top:271px;font-size:17px;transform:scaleX(0.9600);color:#000;">37</div><div class="t k" style="left:683.24px;top:271px;font-size:17px;transform:scaleX(0.9600);color:#000;">14.9</div><div class="t k" style="left:758.31px;top:271px;font-size:17px;transform:scaleX(0.9600);color:#000;">0.7</div><div class="t k" style="left:851.77px;top:271px;font-size:17px;transform:scaleX(0.9600);color:#000;">172</div><div class="t k" style="left:937.24px;top:271px;font-size:17px;transform:scaleX(0.9600);color:#000;">64.2</div><div class="t k" style="left:1021.77px;top:271px;font-size:17px;transform:scaleX(0.9600);color:#000;">340</div><div class="t k" style="left:1111.77px;top:271px;font-size:17px;transform:scaleX(0.9600);color:#000;">712</div><div class="t k" style="left:1193.77px;top:271px;font-size:17px;transform:scaleX(0.9600);color:#000;">374</div><div class="t k" style="left:37px;top:292px;font-size:17px;transform:scaleX(0.9600);color:#000;">C12_d0_1h-1.fcs</div><div class="t k" style="left:230.24px;top:292px;font-size:17px;transform:scaleX(0.9600);color:#000;">0.29</div><div class="t k" style="left:291.24px;top:292px;font-size:17px;transform:scaleX(0.9600);color:#000;">58.6</div><div class="t k" style="left:352.24px;top:292px;font-size:17px;transform:scaleX(0.9600);color:#000;">33.2</div><div class="t k" style="left:414.45px;top:292px;font-size:17px;transform:scaleX(0.9600);color:#000;">11.9</div><div class="t k" style="left:483.24px;top:292px;font-size:17px;transform:scaleX(0.9600);color:#000;">1.24</div><div class="t k" style="left:553.24px;top:292px;font-size:17px;transform:scaleX(0.9600);color:#000;">45.9</div><div class="t k" style="left:613.24px;top:292px;font-size:17px;transform:scaleX(0.9600);color:#000;">38.7</div><div class="t k" style="left:696.85px;top:292px;font-size:17px;transform:scaleX(0.9600);color:#000;">14</div><div class="t k" style="left:758.31px;top:292px;font-size:17px;transform:scaleX(0.9600);color:#000;">0.7</div><div class="t k" style="left:851.77px;top:292px;font-size:17px;transform:scaleX(0.9600);color:#000;">782</div><div class="t k" style="left:941.77px;top:292px;font-size:17px;transform:scaleX(0.9600);color:#000;">745</div><div class="t k" style="left:1021.77px;top:292px;font-size:17px;transform:scaleX(0.9600);color:#000;">903</div><div class="t k" style="left:1102.69px;top:292px;font-size:17px;transform:scaleX(0.9600);color:#000;">2707</div><div class="t k" style="left:1187.12px;top:292px;font-size:17px;transform:scaleX(0.9600);color:#000;">1114</div><div class="t k" style="left:37px;top:313px;font-size:17px;transform:scaleX(0.9600);color:#000;">C12_d0_2h-1.fcs</div><div class="t k" style="left:230.24px;top:313px;font-size:17px;transform:scaleX(0.9600);color:#000;">0.32</div><div class="t k" style="left:291.24px;top:313px;font-size:17px;transform:scaleX(0.9600);color:#000;">57.4</div><div class="t k" style="left:365.85px;top:313px;font-size:17px;transform:scaleX(0.9600);color:#000;">33</div><div class="t k" style="left:413.24px;top:313px;font-size:17px;transform:scaleX(0.9600);color:#000;">14.7</div><div class="t k" style="left:474.16px;top:313px;font-size:17px;transform:scaleX(0.9600);color:#000;">0.082</div><div class="t k" style="left:553.24px;top:313px;font-size:17px;transform:scaleX(0.9600);color:#000;">44.4</div><div class="t k" style="left:613.24px;top:313px;font-size:17px;transform:scaleX(0.9600);color:#000;">40.1</div><div class="t k" style="left:683.24px;top:313px;font-size:17px;transform:scaleX(0.9600);color:#000;">12.5</div><div class="t k" style="left:749.24px;top:313px;font-size:17px;transform:scaleX(0.9600);color:#000;">0.61</div><div class="t k" style="left:851.77px;top:313px;font-size:17px;transform:scaleX(0.9600);color:#000;">670</div><div class="t k" style="left:941.77px;top:313px;font-size:17px;transform:scaleX(0.9600);color:#000;">695</div><div class="t k" style="left:1021.77px;top:313px;font-size:17px;transform:scaleX(0.9600);color:#000;">735</div><div class="t k" style="left:1102.69px;top:313px;font-size:17px;transform:scaleX(0.9600);color:#000;">2297</div><div class="t k" style="left:1193.77px;top:313px;font-size:17px;transform:scaleX(0.9600);color:#000;">906</div><div class="t k" style="left:37px;top:334px;font-size:17px;transform:scaleX(0.9600);color:#000;">C12_d0_4h-1.fcs</div><div class="t k" style="left:230.24px;top:334px;font-size:17px;transform:scaleX(0.9600);color:#000;">0.26</div><div class="t k" style="left:291.24px;top:334px;font-size:17px;transform:scaleX(0.9600);color:#000;">52.3</div><div class="t k" style="left:352.24px;top:334px;font-size:17px;transform:scaleX(0.9600);color:#000;">35.3</div><div class="t k" style="left:413.24px;top:334px;font-size:17px;transform:scaleX(0.9600);color:#000;">17.7</div><div class="t k" style="left:474.16px;top:334px;font-size:17px;transform:scaleX(0.9600);color:#000;">0.056</div><div class="t k" style="left:553.24px;top:334px;font-size:17px;transform:scaleX(0.9600);color:#000;">41.4</div><div class="t k" style="left:613.24px;top:334px;font-size:17px;transform:scaleX(0.9600);color:#000;">41.8</div><div class="t k" style="left:696.85px;top:334px;font-size:17px;transform:scaleX(0.9600);color:#000;">14</div><div class="t k" style="left:749.24px;top:334px;font-size:17px;transform:scaleX(0.9600);color:#000;">0.48</div><div class="t k" style="left:851.77px;top:334px;font-size:17px;transform:scaleX(0.9600);color:#000;">571</div><div class="t k" style="left:941.77px;top:334px;font-size:17px;transform:scaleX(0.9600);color:#000;">622</div><div class="t k" style="left:1021.77px;top:334px;font-size:17px;transform:scaleX(0.9600);color:#000;">673</div><div class="t k" style="left:1102.69px;top:334px;font-size:17px;transform:scaleX(0.9600);color:#000;">1567</div><div class="t k" style="left:1193.77px;top:334px;font-size:17px;transform:scaleX(0.9600);color:#000;">758</div><div class="t k" style="left:37px;top:355px;font-size:17px;transform:scaleX(0.9600);color:#000;">C12_d0_15min-1.fcs</div><div class="t k" style="left:230.24px;top:355px;font-size:17px;transform:scaleX(0.9600);color:#000;">0.34</div><div class="t k" style="left:291.24px;top:355px;font-size:17px;transform:scaleX(0.9600);color:#000;">58.3</div><div class="t k" style="left:352.24px;top:355px;font-size:17px;transform:scaleX(0.9600);color:#000;">33.7</div><div class="t k" style="left:413.24px;top:355px;font-size:17px;transform:scaleX(0.9600);color:#000;">10.8</div><div class="t k" style="left:483.24px;top:355px;font-size:17px;transform:scaleX(0.9600);color:#000;">2.05</div><div class="t k" style="left:553.24px;top:355px;font-size:17px;transform:scaleX(0.9600);color:#000;">44.6</div><div class="t k" style="left:613.24px;top:355px;font-size:17px;transform:scaleX(0.9600);color:#000;">40.6</div><div class="t k" style="left:683.24px;top:355px;font-size:17px;transform:scaleX(0.9600);color:#000;">12.5</div><div class="t k" style="left:749.24px;top:355px;font-size:17px;transform:scaleX(0.9600);color:#000;">0.75</div><div class="t k" style="left:851.77px;top:355px;font-size:17px;transform:scaleX(0.9600);color:#000;">561</div><div class="t k" style="left:941.77px;top:355px;font-size:17px;transform:scaleX(0.9600);color:#000;">440</div><div class="t k" style="left:1021.77px;top:355px;font-size:17px;transform:scaleX(0.9600);color:#000;">791</div><div class="t k" style="left:1102.69px;top:355px;font-size:17px;transform:scaleX(0.9600);color:#000;">2044</div><div class="t k" style="left:1184.69px;top:355px;font-size:17px;transform:scaleX(0.9600);color:#000;">1008</div><div class="t k" style="left:37px;top:376px;font-size:17px;transform:scaleX(0.9600);color:#000;">C12_d0_30min-1.fcs</div><div class="t k" style="left:230.24px;top:376px;font-size:17px;transform:scaleX(0.9600);color:#000;">0.32</div><div class="t k" style="left:291.24px;top:376px;font-size:17px;transform:scaleX(0.9600);color:#000;">57.2</div><div class="t k" style="left:352.24px;top:376px;font-size:17px;transform:scaleX(0.9600);color:#000;">32.9</div><div class="t k" style="left:413.24px;top:376px;font-size:17px;transform:scaleX(0.9600);color:#000;">12.8</div><div class="t k" style="left:483.24px;top:376px;font-size:17px;transform:scaleX(0.9600);color:#000;">1.99</div><div class="t k" style="left:553.24px;top:376px;font-size:17px;transform:scaleX(0.9600);color:#000;">41.4</div><div class="t k" style="left:613.24px;top:376px;font-size:17px;transform:scaleX(0.9600);color:#000;">42.7</div><div class="t k" style="left:684.45px;top:376px;font-size:17px;transform:scaleX(0.9600);color:#000;">11.9</div><div class="t k" style="left:749.24px;top:376px;font-size:17px;transform:scaleX(0.9600);color:#000;">0.51</div><div class="t k" style="left:851.77px;top:376px;font-size:17px;transform:scaleX(0.9600);color:#000;">622</div><div class="t k" style="left:941.77px;top:376px;font-size:17px;transform:scaleX(0.9600);color:#000;">543</div><div class="t k" style="left:1021.77px;top:376px;font-size:17px;transform:scaleX(0.9600);color:#000;">812</div><div class="t k" style="left:1102.69px;top:376px;font-size:17px;transform:scaleX(0.9600);color:#000;">2214</div><div class="t k" style="left:1184.69px;top:376px;font-size:17px;transform:scaleX(0.9600);color:#000;">1082</div><div class="t k" style="left:37px;top:397px;font-size:17px;transform:scaleX(0.9600);color:#000;">Mean</div><div class="t k" style="left:239.31px;top:397px;font-size:17px;transform:scaleX(0.9600);color:#000;">0.3</div><div class="t k" style="left:291.24px;top:397px;font-size:17px;transform:scaleX(0.9600);color:#000;">56.7</div><div class="t k" style="left:352.24px;top:397px;font-size:17px;transform:scaleX(0.9600);color:#000;">33.2</div><div class="t k" style="left:413.24px;top:397px;font-size:17px;transform:scaleX(0.9600);color:#000;">13.8</div><div class="t k" style="left:483.24px;top:397px;font-size:17px;transform:scaleX(0.9600);color:#000;">1.24</div><div class="t k" style="left:553.24px;top:397px;font-size:17px;transform:scaleX(0.9600);color:#000;">44.3</div><div class="t k" style="left:613.24px;top:397px;font-size:17px;transform:scaleX(0.9600);color:#000;">40.2</div><div class="t k" style="left:683.24px;top:397px;font-size:17px;transform:scaleX(0.9600);color:#000;">13.3</div><div class="t k" style="left:749.24px;top:397px;font-size:17px;transform:scaleX(0.9600);color:#000;">0.62</div><div class="t k" style="left:851.77px;top:397px;font-size:17px;transform:scaleX(0.9600);color:#000;">563</div><div class="t k" style="left:941.77px;top:397px;font-size:17px;transform:scaleX(0.9600);color:#000;">518</div><div class="t k" style="left:1021.77px;top:397px;font-size:17px;transform:scaleX(0.9600);color:#000;">709</div><div class="t k" style="left:1102.69px;top:397px;font-size:17px;transform:scaleX(0.9600);color:#000;">1924</div><div class="t k" style="left:1193.77px;top:397px;font-size:17px;transform:scaleX(0.9600);color:#000;">874</div><div class="t k" style="left:37px;top:418px;font-size:17px;transform:scaleX(0.9600);color:#000;">SD</div><div class="t k" style="left:221.16px;top:418px;font-size:17px;transform:scaleX(0.9600);color:#000;">0.028</div><div class="t k" style="left:300.31px;top:418px;font-size:17px;transform:scaleX(0.9600);color:#000;">2.3</div><div class="t k" style="left:361.31px;top:418px;font-size:17px;transform:scaleX(0.9600);color:#000;">1.3</div><div class="t k" style="left:413.24px;top:418px;font-size:17px;transform:scaleX(0.9600);color:#000;">2.48</div><div class="t k" style="left:483.24px;top:418px;font-size:17px;transform:scaleX(0.9600);color:#000;">0.96</div><div class="t k" style="left:553.24px;top:418px;font-size:17px;transform:scaleX(0.9600);color:#000;">2.58</div><div class="t k" style="left:613.24px;top:418px;font-size:17px;transform:scaleX(0.9600);color:#000;">2.07</div><div class="t k" style="left:683.24px;top:418px;font-size:17px;transform:scaleX(0.9600);color:#000;">1.16</div><div class="t k" style="left:750.45px;top:418px;font-size:17px;transform:scaleX(0.9600);color:#000;">0.11</div><div class="t k" style="left:851.77px;top:418px;font-size:17px;transform:scaleX(0.9600);color:#000;">208</div><div class="t k" style="left:941.77px;top:418px;font-size:17px;transform:scaleX(0.9600);color:#000;">248</div><div class="t k" style="left:1021.77px;top:418px;font-size:17px;transform:scaleX(0.9600);color:#000;">197</div><div class="t k" style="left:1111.77px;top:418px;font-size:17px;transform:scaleX(0.9600);color:#000;">700</div><div class="t k" style="left:1193.77px;top:418px;font-size:17px;transform:scaleX(0.9600);color:#000;">277</div><div style="left:881px;top:655px;width:93px;height:25px;border:2px solid #217346;box-sizing:border-box;"></div><div style="left:969px;top:675px;width:7px;height:7px;background:#fff;"></div><div style="left:970px;top:676px;width:5px;height:5px;background:#217346;"></div><div style="left:0px;top:956px;width:1277px;height:28px;background:#f3f3f3;"></div><svg style="left:26.5px;top:964px;" width="40" height="12" viewBox="0 0 40 12"><path d="M5.5 0.5L0.5 5.5L5.5 10.5ZM29.5 0.5l5 5-5 5Z" fill="#c8c8c8"/></svg><div style="left:102px;top:955px;width:79px;height:26px;background:#fff;"></div><div style="left:102px;top:955px;width:1px;height:25px;background:#ababab;"></div><div style="left:180px;top:955px;width:1px;height:25px;background:#ababab;"></div><div style="left:102px;top:979px;width:79px;height:2px;background:#217346;"></div><div class="t" style="left:114.7px;top:958px;font-size:17px;font-weight:bold;transform:scaleX(0.9580);color:#217346;">Sheet0</div><svg style="left:213.8px;top:959.8px;" width="20" height="20" viewBox="0 0 20 20"><circle cx="10" cy="10" r="9" fill="none" stroke="#777" stroke-width="1.3"/><path d="M5.5 10h9M10 5.5v9" stroke="#666" stroke-width="1.6"/></svg><svg style="left:763px;top:963px;" width="3" height="14" viewBox="0 0 3 14"><rect x="0" y="2" width="2" height="2" fill="#999"/><rect x="0" y="6" width="2" height="2" fill="#999"/><rect x="0" y="10" width="2" height="2" fill="#999"/></svg><div style="left:781px;top:960px;width:471px;height:19px;background:#e4e4e4;"></div><div style="left:781px;top:960px;width:19px;height:19px;background:#fff;border:1px solid #c6c6c6;box-sizing:border-box;"></div><svg style="left:787px;top:964.5px;" width="6" height="10" viewBox="0 0 6 10"><path d="M5.5 0L0 4.8L5.5 9.6Z" fill="#777"/></svg><div style="left:1233px;top:960px;width:19px;height:19px;background:#fff;border:1px solid #c6c6c6;box-sizing:border-box;"></div><svg style="left:1240px;top:964.5px;" width="6" height="10" viewBox="0 0 6 10"><path d="M0 0L5.5 4.8L0 9.6Z" fill="#777"/></svg><div style="left:800px;top:960px;width:404px;height:19px;background:#fff;border:1px solid #ababab;box-sizing:border-box;"></div><div style="left:1255px;top:228px;width:19px;height:728px;background:#f6f6f6;"></div><div style="left:1255px;top:228px;width:19px;height:19px;background:#fff;border:1px solid #c6c6c6;box-sizing:border-box;"></div><svg style="left:1260px;top:235px;" width="10" height="6" viewBox="0 0 10 6"><path d="M0 5.5L4.7 0L9.4 5.5Z" fill="#777"/></svg><div style="left:1255px;top:937px;width:19px;height:19px;background:#fff;border:1px solid #c6c6c6;box-sizing:border-box;"></div><svg style="left:1260px;top:944px;" width="10" height="6" viewBox="0 0 10 6"><path d="M0 0L4.7 5.5L9.4 0Z" fill="#777"/></svg><div style="left:1255px;top:247px;width:19px;height:668px;background:#ececec;border:1px solid #b9b9b9;box-sizing:border-box;"></div><div style="left:0px;top:984px;width:1278px;height:26px;background:#217346;"></div><div class="t" style="left:6.3px;top:992px;font-size:12.6px;transform:scaleX(0.8350);color:#fff;">BEREIT</div><div style="left:922.5px;top:984px;width:40.5px;height:26px;background:#0f6937;"></div><svg style="left:0px;top:984px;" width="1277" height="26" viewBox="0 0 1277 26"><g fill="none" stroke="#fff" stroke-width="1.2"><rect x="935.6" y="6.6" width="12" height="12"/><path d="M939.6 6.6v12M943.6 6.6v12M935.6 10.6h12M935.6 14.6h12"/><rect x="976.6" y="6.6" width="13" height="12"/><rect x="979.6" y="9.2" width="7" height="7"/><path d="M981 11.5h4.2M981 14h4.2"/><rect x="1017.6" y="6.6" width="13" height="12"/></g><rect x="1018" y="7" width="3.4" height="6.5" fill="#fff"/><rect x="1022.6" y="7" width="3.6" height="4.5" fill="#fff"/><path d="M1022 7v6.6" stroke="#0f6937" stroke-width=".8"/><rect x="1050" y="12" width="9" height="2" fill="#fff"/><rect x="1063" y="12.6" width="125" height="1" fill="#fff"/><rect x="1123" y="6" width="5" height="17" fill="#fff"/><rect x="1192" y="12" width="12" height="2" fill="#fff"/><rect x="1197" y="7" width="2" height="12" fill="#fff"/></svg><div class="t" style="left:1220px;top:992px;font-size:12.6px;transform:scaleX(0.9518);color:#fff;">100 %</div><div style="left:1277px;top:0px;width:1px;height:1010px;background:#1e6b41;"></div></div>
<div style="left:1278px;top:0;width:2px;height:1010px;background:linear-gradient(180deg,#5d6b63 0,#3a453f 24px,#141716 30px,#141716 100%)"></div>
<div class="win" style="left:1280px;top:0;width:1276px;height:1008px"><div style="left:1px;top:0;width:1274px;height:1008px"><div style="left:0px;top:0px;width:1275px;height:1px;background:#8e8e8e;"></div><svg style="left:0px;top:0px;" width="640" height="32" viewBox="0 0 640 32"><path d="M9 9.6L20.5 7V27L9 24.4Z" fill="#1d7044"/><rect x="20.5" y="9.5" width="8" height="14.5" rx="1.2" fill="#fff" stroke="#1d7044"/><rect x="21.6" y="11.2" width="2.6" height="1.9" fill="#1d7044"/><rect x="25" y="11.2" width="2.6" height="1.9" fill="#1d7044"/><rect x="21.6" y="14.3" width="2.6" height="1.9" fill="#1d7044"/><rect x="25" y="14.3" width="2.6" height="1.9" fill="#1d7044"/><rect x="21.6" y="17.4" width="2.6" height="1.9" fill="#1d7044"/><rect x="25" y="17.4" width="2.6" height="1.9" fill="#1d7044"/><rect x="21.6" y="20.5" width="2.6" height="1.9" fill="#1d7044"/><rect x="25" y="20.5" width="2.6" height="1.9" fill="#1d7044"/><path d="M11.6 12.4h1.9l1.3 2.9 1.3-3.1h1.9l-2.2 4.8 2.3 5h-1.9l-1.4-3.2-1.3 3h-1.9l2.2-4.7Z" fill="#fff"/><rect x="44" y="9.3" width="16" height="15.5" rx="1.2" fill="#7b4fa5"/><rect x="46" y="10.6" width="12" height="7.4" fill="#fbf3ff"/><rect x="48" y="20" width="8" height="4.3" fill="#fff"/><rect x="50" y="21.6" width="2" height="2.7" fill="#7b4fa5"/><path d="M76 14.7L83.6 9.8V19.6Z" fill="#3b6db0"/><path d="M82.5 14.7H87.6a4.9 4.9 0 0 1 0.3 9.7" fill="none" stroke="#3b6db0" stroke-width="3.2"/><path d="M100 15h7l-3.5 3.6Z" fill="#666"/><path d="M139.2 14.7L131.6 9.8V19.6Z" fill="#b3b3b3"/><path d="M132.7 14.7H127.6a4.9 4.9 0 0 0 -0.3 9.7" fill="none" stroke="#b3b3b3" stroke-width="3.2"/><path d="M145 15h7l-3.5 3.6Z" fill="#c4c4c4"/><rect x="165" y="9" width="1" height="16" fill="#dadada"/><rect x="245" y="9" width="1" height="16" fill="#dadada"/><rect x="325" y="9" width="1" height="16" fill="#dadada"/><rect x="405" y="9" width="1" height="16" fill="#dadada"/><rect x="518" y="9" width="1" height="16" fill="#dadada"/><rect x="565" y="9" width="1" height="16" fill="#dadada"/><path d="M183 7.5H179.5V25.5H183M194 7.5H197.5V25.5H194" fill="none" stroke="#666"/><text x="188.5" y="15.6" font-family="Liberation Serif" font-size="9.5" text-anchor="middle" fill="#555">10</text><text x="188.5" y="24" font-family="Liberation Serif" font-size="9.5" text-anchor="middle" fill="#555">01</text><rect x="212.5" y="7.5" width="10" height="10" fill="#fff" stroke="#666"/><rect x="216.5" y="11.5" width="10" height="10" fill="#fff" stroke="#666"/><rect x="220.5" y="15.5" width="10" height="10" fill="#fff" stroke="#666"/><path d="M261 15.4H270.3L267 11.3H271L276.8 17L271 22.7H267L270.3 18.6H261Z" fill="#3b78c3"/><path d="M298 10.2Q302 8.2 306 10.2V16.5H310.3L302 24.6L293.7 16.5H298Z" fill="#3b78c3"/><path d="M340 8.3H358L351 16.4V25H347V16.4Z" fill="#666"/><path d="M343.5 10.3L348.6 16.6V24" fill="none" stroke="#fff" stroke-width="0.9"/><path d="M373 9.3H391L384 17.4V26H380V17.4Z" fill="#666"/><path d="M376.5 11.3L381.6 17.6V25" fill="none" stroke="#fff" stroke-width="0.9"/><rect x="420" y="16" width="5" height="10" fill="#3b78c3"/><rect x="426" y="9" width="5" height="17" fill="#e8b96a"/><rect x="432" y="13" width="5" height="13" fill="#707070"/><rect x="453" y="8" width="11" height="5" fill="#3b78c3"/><rect x="453" y="14" width="17" height="5" fill="#e8b96a"/><rect x="453" y="20" width="13" height="5" fill="#707070"/><path d="M486 20.6L491.5 8.4L496.6 15.8L489.5 20Z" fill="#e8b96a"/><path d="M497.5 13.6L501.2 9.8L504 17.5V24Z" fill="#8a8a8a"/><path d="M486 26V21.6L489.6 20.2L497.4 11.6L504 25V26Z" fill="#3b78c3"/><circle cx="542" cy="17" r="10" fill="#f6d43a"/><circle cx="538.4" cy="14.3" r="1.4" fill="#5b4a16"/><circle cx="545.6" cy="14.3" r="1.4" fill="#5b4a16"/><path d="M536.2 19.3Q542 25.6 547.8 19.3" fill="none" stroke="#5b4a16" stroke-width="1.5"/><rect x="581.5" y="13.5" width="16" height="11" fill="#fff" stroke="#8a8a8a"/><path d="M583 19.5h6M591 19.5h5M583 22h13" stroke="#aaa"/><path d="M580 11l3-2.5 3.5 1v4l-3 2-3.5-1Z" fill="#e9c89a"/><path d="M589 10l3-2 3.2 1.6v3.4l-3.2 2-3-1.6Z" fill="#e8748f"/><path d="M613 15.5h7" stroke="#777"/><path d="M613 18h7l-3.5 3.6Z" fill="#777"/></svg><div class="t" style="left:748.5px;top:11px;font-size:15.8px;transform:scaleX(0.8980);color:#b4b4b4;">FACS Analysis Template.xlsx - Excel</div><div class="t" style="left:1121px;top:11px;font-size:15px;font-weight:bold;color:#c4c4c4;">?</div><svg style="left:0px;top:0px;" width="1274" height="32" viewBox="0 0 1274 32"><rect x="1150.5" y="11.5" width="15" height="11" fill="none" stroke="#c4c4c4"/><path d="M1150.5 13.5h15" stroke="#c4c4c4"/><path d="M1158 21.5V15.8M1154.3 18.8L1158 15.2L1161.7 18.8" fill="none" stroke="#c4c4c4" stroke-width="1.5"/><rect x="1185" y="19" width="12" height="2.2" fill="#c4c4c4"/><rect x="1218.5" y="12" width="11" height="10.5" fill="none" stroke="#c4c4c4"/><rect x="1218" y="11" width="12" height="2.6" fill="#c4c4c4"/><path d="M1251.5 11.5L1262.5 22.5M1262.5 11.5L1251.5 22.5" stroke="#c4c4c4" stroke-width="1.9"/></svg><div style="left:0px;top:63px;width:1274px;height:1px;background:#d4d4d4;"></div><div style="left:-1px;top:33px;width:73px;height:31px;background:#217346;"></div><div class="t" style="left:15.9px;top:42px;font-size:15.7px;transform:scaleX(0.8519);color:#fff;">DATEI</div><div style="left:76px;top:33px;width:68px;height:32px;background:#fff;border:1px solid #d4d4d4;border-bottom:none;box-sizing:border-box;"></div><div class="t" style="left:89.4px;top:42px;font-size:15.7px;transform:scaleX(0.7917);color:#217346;">START</div><div class="t" style="left:159.5px;top:42px;font-size:15.7px;transform:scaleX(0.8321);color:#444;">EINFÜGEN</div><div class="t" style="left:257px;top:42px;font-size:15.7px;transform:scaleX(0.8280);color:#444;">SEITENLAYOUT</div><div class="t" style="left:385px;top:42px;font-size:15.7px;transform:scaleX(0.8468);color:#444;">FORMELN</div><div class="t" style="left:480.5px;top:42px;font-size:15.7px;transform:scaleX(0.8742);color:#444;">DATEN</div><div class="t" style="left:556px;top:42px;font-size:15.7px;transform:scaleX(0.8181);color:#444;">ÜBERPRÜFEN</div><div class="t" style="left:674px;top:42px;font-size:15.7px;transform:scaleX(0.8852);color:#444;">ANSICHT</div><div class="t" style="left:764px;top:42px;font-size:15.7px;transform:scaleX(0.9374);color:#444;">ADD-INS</div><div class="t" style="left:1081px;top:41px;font-size:15.7px;transform:scaleX(0.9018);color:#444;">Lopez Perez, Ramon</div><svg style="left:1221px;top:45px;" width="8" height="5" viewBox="0 0 8 5"><path d="M0 0h7l-3.5 3.6Z" fill="#777"/></svg><svg style="left:1234px;top:33px;" width="30" height="31" viewBox="0 0 30 31"><rect width="30" height="31" fill="#ababab"/><circle cx="15" cy="11.5" r="6.2" fill="#fff"/><path d="M3.5 31V24a6 6 0 0 1 6-6h11a6 6 0 0 1 6 6v7Z" fill="#fff"/><circle cx="15" cy="11.5" r="7.3" fill="none" stroke="#ababab" stroke-width="1.2"/></svg><div style="left:0px;top:175px;width:1274px;height:1px;background:#d4d4d4;"></div><svg style="left:0px;top:64px;" width="1274" height="112" viewBox="0 64 1274 112"><rect x="116" y="68" width="1" height="104" fill="#dedede"/><rect x="351" y="68" width="1" height="104" fill="#dedede"/><rect x="542" y="68" width="1" height="104" fill="#dedede"/><rect x="642" y="68" width="1" height="104" fill="#dedede"/><rect x="847" y="68" width="1" height="104" fill="#dedede"/><rect x="961" y="68" width="1" height="104" fill="#dedede"/><rect x="1190" y="68" width="1" height="104" fill="#dedede"/><rect x="216" y="117" width="1" height="22" fill="#e1e1e1"/><rect x="264" y="117" width="1" height="22" fill="#e1e1e1"/><rect x="493" y="82" width="1" height="54" fill="#e1e1e1"/><path d="M103.5 166V162.5H107" fill="none" stroke="#777"/><path d="M106 165L109.3 168.3M110 165.5V169H106.5" fill="none" stroke="#666" stroke-width="1.2"/><path d="M338.5 166V162.5H342" fill="none" stroke="#777"/><path d="M341 165L344.3 168.3M345 165.5V169H341.5" fill="none" stroke="#666" stroke-width="1.2"/><path d="M529.5 166V162.5H533" fill="none" stroke="#777"/><path d="M532 165L535.3 168.3M536 165.5V169H532.5" fill="none" stroke="#666" stroke-width="1.2"/><path d="M629.5 166V162.5H633" fill="none" stroke="#777"/><path d="M632 165L635.3 168.3M636 165.5V169H632.5" fill="none" stroke="#666" stroke-width="1.2"/><rect x="23" y="76" width="27" height="31" rx="1" fill="#d6d4d6"/><path d="M28 80V75.5h5.5a3 3 0 0 1 6 0H45V80Z" fill="#b4b2b4"/><circle cx="36.5" cy="75.5" r="1.4" fill="#fff"/><path d="M42.5 90.5H52L56.5 95V109.5H42.5Z" fill="#f1eff1" stroke="#c9c7c9"/><path d="M52 90.5V95H56.5" fill="none" stroke="#c9c7c9"/><path d="M34 140h7l-3.5 3.6Z" fill="#c4c4c4"/><path d="M76.5 72.5L84.5 84M87.5 72.5L79.5 84" stroke="#555" stroke-width="1.8" fill="none"/><circle cx="76.5" cy="86.5" r="2.8" fill="#fff" stroke="#3b6db0" stroke-width="1.4"/><circle cx="86.5" cy="86.5" r="2.8" fill="#fff" stroke="#3b6db0" stroke-width="1.4"/><path d="M73.5 100.5H80L83.5 104V112.5H73.5Z" fill="#fff" stroke="#666"/><path d="M75.5 104.5h5M75.5 107h6M75.5 109.5h6" stroke="#777"/><path d="M80.5 106.5H87L90.5 110V117.5H80.5Z" fill="#fff" stroke="#666"/><path d="M82.5 110.5h5M82.5 113h6M82.5 115.2h6" stroke="#777"/><path d="M98 107h7l-3.5 3.6Z" fill="#666"/><path d="M74 137.5L83 132L87.5 139L79.5 144Z" fill="#e8b96a"/><path d="M82.5 131.5L86.5 129L91 136L87 138.5Z" fill="#666"/><path d="M87.5 130.5L90.5 128.6" stroke="#666" stroke-width="2.2"/><rect x="121.5" y="78.5" width="113" height="26" fill="#fff" stroke="#ababab"/><rect x="235.5" y="78.5" width="59" height="26" fill="#fff" stroke="#ababab"/><path d="M224 89h7l-3.5 3.6Z" fill="#666"/><path d="M284 89h7l-3.5 3.6Z" fill="#666"/><path d="M311 85l2.9-3.1 2.9 3.1Z" fill="#40526b"/><path d="M336 83l2.9 2.9 2.9-2.9Z" fill="#40526b"/><path d="M180.2 135.5H191.1" stroke="#444" stroke-width="1.2"/><path d="M202 126h7l-3.5 3.6Z" fill="#666"/><path d="M225.5 118.5H241.5V134M225.5 118.5V134M233.5 119V134M226 126.5H241" fill="none" stroke="#777" stroke-dasharray="1 1"/><path d="M225 135.5H242" stroke="#555" stroke-width="1.4"/><path d="M250 126h7l-3.5 3.6Z" fill="#666"/><rect x="272" y="133" width="20" height="5.5" fill="#fff200"/><path d="M281.5 120.5L289 127.5L281 132.5L275.5 126Z" fill="#fff" stroke="#555" stroke-width="1.1"/><path d="M279 124.5V119.5a1.7 1.7 0 0 1 3.4 0V122" fill="none" stroke="#555" stroke-width="1.1"/><path d="M288.5 124.5Q291.8 126.5 290.3 131Q288 129.5 288.5 124.5Z" fill="#3b6db0" stroke="#3b6db0" stroke-width=".8"/><path d="M298 126h7l-3.5 3.6Z" fill="#666"/><rect x="311" y="133" width="20" height="5.5" fill="#ee1111"/><path d="M337 126h7l-3.5 3.6Z" fill="#666"/><rect x="382" y="78" width="26" height="26.7" fill="#9cd3b3"/><path d="M360 82.5H378" stroke="#555" stroke-width="1"/><path d="M362 85.5H376" stroke="#555" stroke-width="1"/><path d="M360 88.5H378" stroke="#555" stroke-width="1"/><path d="M386 86.5H404" stroke="#555" stroke-width="1"/><path d="M388 89.5H402" stroke="#555" stroke-width="1"/><path d="M386 92.5H404" stroke="#555" stroke-width="1"/><path d="M388 95.5H402" stroke="#555" stroke-width="1"/><path d="M412 90.5H430" stroke="#555" stroke-width="1"/><path d="M414 93.5H428" stroke="#555" stroke-width="1"/><path d="M412 96.5H430" stroke="#555" stroke-width="1"/><path d="M414 99.5H428" stroke="#555" stroke-width="1"/><text transform="translate(444.3,96.8) rotate(-47)" font-family="Liberation Sans" font-size="12.5" fill="#555">ab</text><path d="M448.4 98.6L458.2 88.8M453.8 88.3H458.7V93.2" fill="none" stroke="#555" stroke-width="1.2"/><path d="M464 89h7l-3.5 3.6Z" fill="#666"/><rect x="502.5" y="82.5" width="11" height="4.8" fill="#fff" stroke="#666"/><rect x="502.5" y="90.5" width="11" height="9" fill="#fff" stroke="#666"/><path d="M504.5 93.5h7M504.5 96.5h7M504.5 84.5h14" stroke="#777"/><path d="M520.2 86V88.3a2.6 2.6 0 0 1 -2.6 2.6H514.6M517 88.2l-2.9 2.7 2.9 2.7" fill="none" stroke="#3b6db0" stroke-width="1.6"/><path d="M362 123.5H376" stroke="#666" stroke-width="1"/><path d="M362 126.5H372" stroke="#666" stroke-width="1"/><path d="M362 129.5H376" stroke="#666" stroke-width="1"/><path d="M362 132.5H372" stroke="#666" stroke-width="1"/><path d="M387 123.5H403" stroke="#666" stroke-width="1"/><path d="M390 126.5H400" stroke="#666" stroke-width="1"/><path d="M387 129.5H403" stroke="#666" stroke-width="1"/><path d="M390 132.5H400" stroke="#666" stroke-width="1"/><path d="M414 123.5H428" stroke="#666" stroke-width="1"/><path d="M418 126.5H428" stroke="#666" stroke-width="1"/><path d="M414 129.5H428" stroke="#666" stroke-width="1"/><path d="M418 132.5H428" stroke="#666" stroke-width="1"/><path d="M443 123.5H459" stroke="#666" stroke-width="1"/><path d="M450.5 126.5H459" stroke="#666" stroke-width="1"/><path d="M450.5 129.5H456" stroke="#666" stroke-width="1"/><path d="M443 132.5H459" stroke="#666" stroke-width="1"/><path d="M442 128h8M445.3 124.8L442 128l3.3 3.2" fill="none" stroke="#3b6db0" stroke-width="1.6"/><path d="M469 123.5H485" stroke="#666" stroke-width="1"/><path d="M476.5 126.5H485" stroke="#666" stroke-width="1"/><path d="M476.5 129.5H482" stroke="#666" stroke-width="1"/><path d="M469 132.5H485" stroke="#666" stroke-width="1"/><path d="M467.5 128h7.5M471.8 124.8l3.3 3.2-3.3 3.2" fill="none" stroke="#3b6db0" stroke-width="1.6"/><rect x="501.5" y="118.5" width="18" height="18" fill="#fff" stroke="#666"/><path d="M501.5 122.5h18M501.5 132.5h18M510.5 118.5V122.5M510.5 132.5V136.5" stroke="#666"/><path d="M504 127.7h13M506.3 125.5L504 127.7l2.3 2.2M514.7 125.5l2.3 2.2-2.3 2.2" fill="none" stroke="#3b6db0" stroke-width="1.1"/><path d="M527 126h7l-3.5 3.6Z" fill="#666"/><rect x="547.5" y="68.5" width="91" height="26" fill="#fff" stroke="#ababab"/><path d="M627 79h7l-3.5 3.6Z" fill="#666"/><rect x="550" y="100" width="19" height="10.8" fill="#3d62a8"/><path d="M552.2 103.5h1.2v-1.2h12.2v1.2h1.2v3.8h-1.2v1.2h-12.2v-1.2h-1.2Z" fill="#fff"/><circle cx="559.4" cy="105.2" r="2.1" fill="#3d62a8"/><ellipse cx="559.3" cy="116.5" rx="3.6" ry="1.5" fill="#e8c27a" stroke="#fff" stroke-width=".5"/><ellipse cx="559.3" cy="114" rx="3.6" ry="1.5" fill="#e8c27a" stroke="#fff" stroke-width=".5"/><ellipse cx="559.3" cy="111.5" rx="3.6" ry="1.5" fill="#e8c27a" stroke="#fff" stroke-width=".5"/><ellipse cx="565.3" cy="113.5" rx="3.6" ry="1.5" fill="#e8c27a" stroke="#fff" stroke-width=".5"/><ellipse cx="565.3" cy="111" rx="3.6" ry="1.5" fill="#e8c27a" stroke="#fff" stroke-width=".5"/><ellipse cx="565.3" cy="108.5" rx="3.6" ry="1.5" fill="#e8c27a" stroke="#fff" stroke-width=".5"/><path d="M576 107h7l-3.5 3.6Z" fill="#666"/><path d="M552.6 133h6.6M555.4 130.3l-2.8 2.7 2.8 2.7" fill="none" stroke="#3b6db0" stroke-width="1.6"/><path d="M578.3 142h6M581.8 139.3l2.8 2.7-2.8 2.7" fill="none" stroke="#3b6db0" stroke-width="1.6"/><rect x="651.5" y="71.5" width="16" height="16" fill="#fff" stroke="#777"/><path d="M651.5 76.5h16M651.5 82h16M656.5 71.5v16M662 71.5v16" stroke="#999"/><rect x="652" y="72" width="4.5" height="4.5" fill="#d0d0d0"/><rect x="656.5" y="72" width="5.5" height="4.5" fill="#c9513f"/><rect x="656.5" y="76.5" width="5.5" height="5.5" fill="#3b6db0"/><rect x="652" y="82" width="4.5" height="5.5" fill="#c9513f"/><rect x="659.5" y="81.5" width="10.5" height="8" fill="#fff" stroke="#555"/><path d="M662 84.3h5.5M662 86.7h5.5M666 82.8l-2.4 5.4" stroke="#444" stroke-width=".9"/><rect x="651.5" y="100.5" width="17" height="12" fill="#fff" stroke="#777"/><rect x="656" y="104.5" width="9" height="6.5" fill="#b8c7dd"/><path d="M651.5 104.5h17M651.5 108.5h17M656 100.5v12M660.5 100.5v12M665 100.5v12" stroke="#999" stroke-width=".8"/><path d="M669.8 105.2L662 113.3" stroke="#666" stroke-width="2.4"/><path d="M663 112Q658.5 113 656 117.5Q661.5 118.5 664.8 113.6Z" fill="#3b6db0"/><rect x="651.5" y="125.5" width="17" height="14" fill="#fff" stroke="#777"/><rect x="656" y="129.5" width="9" height="6.5" fill="#b8c7dd"/><path d="M651.5 129.5h17M651.5 133.5h17M656 125.5v12M660.5 125.5v12M665 125.5v12" stroke="#999" stroke-width=".8"/><path d="M669.8 130.2L662 138.3" stroke="#666" stroke-width="2.4"/><path d="M663 137Q658.5 138 656 142.5Q661.5 143.5 664.8 138.6Z" fill="#3b6db0"/><rect x="856.5" y="71.5" width="10" height="3" fill="#fff" stroke="#666"/><path d="M861.5 71.5v3" stroke="#666"/><rect x="863.5" y="77.5" width="10" height="3.4" fill="#c5c9cf" stroke="#777"/><path d="M857 79.2h6M859.5 76.6l-2.6 2.6 2.6 2.6" fill="none" stroke="#3b6db0" stroke-width="1.5"/><rect x="856.5" y="84.5" width="10" height="5.5" fill="#fff" stroke="#666"/><path d="M861.5 84.5v5.5M856.5 87.2h10" stroke="#666"/><rect x="856.5" y="99.5" width="8" height="3" fill="#fff" stroke="#666"/><rect x="859.5" y="105" width="6" height="3" fill="#c9c9c9" stroke="#777"/><rect x="856.5" y="110.5" width="10" height="5" fill="#fff" stroke="#666"/><path d="M861.5 110.5v5M856.5 113h10" stroke="#666"/><path d="M866 101.5l8.5 8M874.5 101.5l-8.5 8" stroke="#e0492e" stroke-width="1.9"/><path d="M857 125.5h15M857 123.8v3.4M872 123.8v3.4M859.3 124l-1.8 1.5 1.8 1.5M869.7 124l1.8 1.5-1.8 1.5" fill="none" stroke="#3b6db0" stroke-width=".9"/><rect x="856.5" y="129.5" width="17" height="11" fill="#fff" stroke="#666"/><path d="M860.5 129.5v11M869.5 129.5v11M856.5 132.5h17M856.5 137.5h17" stroke="#999"/><rect x="861" y="132.5" width="7.5" height="5" fill="#3f65b0"/><path d="M856.5 140.5v3h8l2.5-3M861 140.5v3" fill="none" stroke="#777"/><path d="M946 78h7l-3.5 3.6Z" fill="#666"/><path d="M941 105h7l-3.5 3.6Z" fill="#666"/><path d="M929 132h7l-3.5 3.6Z" fill="#666"/><path d="M830 78h7l-3.5 3.6Z" fill="#666"/><path d="M830 105h7l-3.5 3.6Z" fill="#666"/><path d="M821 132h7l-3.5 3.6Z" fill="#666"/><path d="M985 76V72.8H971.5L978.6 80.2L971.5 87.4H985.6V84" fill="none" stroke="#444" stroke-width="1.7"/><path d="M994 78h7l-3.5 3.6Z" fill="#666"/><rect x="970.5" y="98.5" width="16" height="17" fill="#fff" stroke="#666"/><rect x="970.5" y="98.5" width="16" height="3" fill="#777"/><path d="M978.5 103.5v8.5M974.8 108.3l3.7 3.9 3.7-3.9" fill="none" stroke="#2f75c4" stroke-width="1.8"/><path d="M993 105h7l-3.5 3.6Z" fill="#666"/><path d="M971.6 135.5L981.5 125.7L986.6 130.8L976.7 140.6Z" fill="#ee7d92"/><path d="M973.2 133.7L978.4 139" stroke="#fff" stroke-width="1"/><path d="M977 141.7h11.5" stroke="#555"/><path d="M993 132h7l-3.5 3.6Z" fill="#666"/><path d="M1052.4 81.6H1070L1063 89.5V98H1059.3V89.5Z" fill="#666"/><path d="M1055.5 83.3L1060.6 89.5V97" fill="none" stroke="#fff" stroke-width=".9"/><path d="M1073 140h7l-3.5 3.6Z" fill="#666"/><path d="M1177 140h7l-3.5 3.6Z" fill="#666"/><path d="M1126 105V92h3v-6h3v-7h2v-3.5h5V79h1.5v13h5V79h1.5v-3.5h5V79h2v7h3v6h3v13h-14V93.5h-6.5V105Z" fill="#6a6a6a"/><path d="M1128 93.5V103M1158 93.5V103M1131 87.5v4M1155 87.5v4" stroke="#fff" stroke-width="1"/><path d="M1141.2 88.5h3.6" stroke="#fff" stroke-width="1.2"/></svg><div class="t" style="left:9px;top:116px;font-size:15.7px;transform:scaleX(0.9099);color:#a6a6a6;">Einfügen</div><div class="t" style="left:2px;top:159px;font-size:13px;transform:scaleX(0.9792);color:#666;">Zwischenablage</div><div class="t" style="left:198px;top:159px;font-size:13px;transform:scaleX(0.9901);color:#666;">Schriftart</div><div class="t" style="left:403px;top:159px;font-size:13px;transform:scaleX(0.9759);color:#666;">Ausrichtung</div><div class="t" style="left:571px;top:159px;font-size:13px;transform:scaleX(0.9492);color:#666;">Zahl</div><div class="t" style="left:700px;top:159px;font-size:13px;transform:scaleX(0.9886);color:#666;">Formatvorlagen</div><div class="t" style="left:887px;top:159px;font-size:13px;transform:scaleX(0.9601);color:#666;">Zellen</div><div class="t" style="left:1045px;top:159px;font-size:13px;transform:scaleX(0.9860);color:#666;">Bearbeiten</div><div class="t" style="left:124.5px;top:85px;font-size:15.7px;transform:scaleX(0.9390);color:#222;">Arial</div><div class="t" style="left:239.5px;top:85px;font-size:15.7px;transform:scaleX(0.8305);color:#222;">10</div><div class="t" style="left:303.1px;top:85px;font-size:15.4px;color:#555;">A</div><div class="t" style="left:328px;top:86px;font-size:15.4px;color:#555;">A</div><div class="t" style="left:129.7px;top:122px;font-size:16px;font-weight:bold;color:#444;">F</div><div class="t" style="left:154px;top:122px;font-size:16px;font-weight:bold;font-style:italic;color:#444;">K</div><div class="t" style="left:180.6px;top:122px;font-size:15.7px;font-weight:bold;color:#444;">U</div><div class="t" style="left:314.5px;top:116px;font-size:18px;color:#444;">A</div><div class="t" style="left:551px;top:75px;font-size:15.7px;transform:scaleX(0.9101);color:#222;">Standard</div><div class="t" style="left:591.3px;top:101px;font-size:18.5px;color:#555;">%</div><div class="t" style="left:615.9px;top:105px;font-size:10.5px;transform:scaleX(0.9764);color:#555;">000</div><div class="t" style="left:560.6px;top:129px;font-size:9.3px;transform:scaleX(0.8251);color:#444;">.0</div><div class="t" style="left:554.2px;top:138px;font-size:9.3px;transform:scaleX(0.9902);color:#444;">.00</div><div class="t" style="left:581px;top:129px;font-size:9.3px;transform:scaleX(0.9360);color:#444;">,00</div><div class="t" style="left:586.4px;top:138px;font-size:9.3px;transform:scaleX(0.8638);color:#444;">,0</div><div class="t" style="left:674px;top:74px;font-size:15.7px;transform:scaleX(0.9455);color:#444;">Bedingte Formatierung</div><div class="t" style="left:674px;top:101px;font-size:15.7px;transform:scaleX(0.9473);color:#444;">Als Tabelle formatieren</div><div class="t" style="left:674px;top:128px;font-size:15.7px;transform:scaleX(0.9628);color:#444;">Zellenformatvorlagen</div><div class="t" style="left:879px;top:74px;font-size:15.7px;transform:scaleX(0.9035);color:#444;">Einfügen</div><div class="t" style="left:879px;top:101px;font-size:15.7px;transform:scaleX(0.8591);color:#444;">Löschen</div><div class="t" style="left:879px;top:128px;font-size:15.7px;transform:scaleX(0.9251);color:#444;">Format</div><div class="t" style="left:1008px;top:116px;font-size:15.7px;transform:scaleX(0.9442);color:#444;">Sortieren und</div><div class="t" style="left:1027px;top:136px;font-size:15.7px;transform:scaleX(0.9401);color:#444;">Filtern</div><div class="t" style="left:1105px;top:116px;font-size:15.7px;transform:scaleX(0.9068);color:#444;">Suchen und</div><div class="t" style="left:1102px;top:136px;font-size:15.7px;transform:scaleX(0.9244);color:#444;">Auswählen</div><div class="t" style="left:1035.5px;top:73px;font-size:19px;color:#3b6db0;">A</div><div class="t" style="left:1036px;top:90px;font-size:19px;color:#8a54a2;">Z</div><svg style="left:1252px;top:161px;" width="12" height="8" viewBox="0 0 12 8"><path d="M1 6.5L6 1.5L11 6.5" fill="none" stroke="#666" stroke-width="1.8"/></svg><div style="left:4px;top:186px;width:128px;height:30px;background:#fff;border:1px solid #c6c6c6;box-sizing:border-box;"></div><div class="t" style="left:11.6px;top:195px;font-size:15.7px;transform:scaleX(0.9114);color:#444;">A3</div><svg style="left:116px;top:198px;" width="8" height="5" viewBox="0 0 8 5"><path d="M0 0h7l-3.5 3.6Z" fill="#777"/></svg><svg style="left:149px;top:195px;" width="3" height="13" viewBox="0 0 3 13"><rect x="0" y="1" width="2" height="2" fill="#999"/><rect x="0" y="5" width="2" height="2" fill="#999"/><rect x="0" y="9" width="2" height="2" fill="#999"/></svg><div style="left:169px;top:186px;width:137px;height:30px;background:#fff;border:1px solid #c6c6c6;box-sizing:border-box;"></div><svg style="left:180px;top:190px;" width="120" height="22" viewBox="0 0 120 22"><path d="M4.5 5.5L18.5 17M18.5 5.5L4.5 17" stroke="#c9c9c9" stroke-width="2"/><path d="M49.5 12L54.5 17L65.5 5.5" fill="none" stroke="#c9c9c9" stroke-width="2.6"/></svg><div class="t" style="left:273px;top:189px;font-size:21px;font-weight:bold;font-style:italic;font-family:'Liberation Serif',serif;color:#666;">f</div><div class="t" style="left:281.69px;top:196px;font-size:15px;font-weight:bold;font-style:italic;font-family:'Liberation Serif',serif;color:#666;">x</div><div style="left:309px;top:186px;width:960px;height:30px;background:#fff;border:1px solid #c6c6c6;box-sizing:border-box;"></div><div class="t" style="left:323px;top:195px;font-size:15.7px;transform:scaleX(1.0447);color:#444;">Control1</div><svg style="left:1253px;top:197px;" width="11" height="8" viewBox="0 0 11 8"><path d="M1 1.5L5.5 6L10 1.5" fill="none" stroke="#666" stroke-width="2.4"/></svg><div style="left:0px;top:225px;width:1248px;height:727px;background:#fff;"></div><div style="left:6px;top:228px;width:21px;height:21px;background:#fff;border:1px solid #777;box-sizing:border-box;"></div><div class="t" style="left:13.64px;top:235px;font-size:11px;color:#555;">1</div><div style="left:6px;top:249px;width:21px;height:21px;background:#fff;border:1px solid #777;box-sizing:border-box;"></div><div class="t" style="left:13.64px;top:256px;font-size:11px;color:#555;">2</div><div style="left:763px;top:235px;width:485px;height:2px;background:#999;"></div><div style="left:763px;top:235px;width:1px;height:4px;background:#999;"></div><div style="left:813.5px;top:256px;width:2px;height:2px;background:#888;"></div><div style="left:917.5px;top:256px;width:2px;height:2px;background:#888;"></div><div style="left:1021.5px;top:256px;width:2px;height:2px;background:#888;"></div><div style="left:1125.5px;top:256px;width:2px;height:2px;background:#888;"></div><div style="left:1229.5px;top:256px;width:2px;height:2px;background:#888;"></div><div style="left:0px;top:316px;width:1248px;height:1px;background:#d4d4d4;"></div><div style="left:0px;top:339px;width:1248px;height:1px;background:#d4d4d4;"></div><div style="left:0px;top:361px;width:1248px;height:1px;background:#d4d4d4;"></div><div style="left:0px;top:383px;width:1248px;height:1px;background:#d4d4d4;"></div><div style="left:0px;top:405px;width:1248px;height:1px;background:#d4d4d4;"></div><div style="left:0px;top:427px;width:1248px;height:1px;background:#d4d4d4;"></div><div style="left:0px;top:449px;width:1248px;height:1px;background:#d4d4d4;"></div><div style="left:0px;top:471px;width:1248px;height:1px;background:#d4d4d4;"></div><div style="left:0px;top:493px;width:1248px;height:1px;background:#d4d4d4;"></div><div style="left:0px;top:515px;width:1248px;height:1px;background:#d4d4d4;"></div><div style="left:0px;top:537px;width:1248px;height:1px;background:#d4d4d4;"></div><div style="left:0px;top:559px;width:1248px;height:1px;background:#d4d4d4;"></div><div style="left:0px;top:581px;width:1248px;height:1px;background:#d4d4d4;"></div><div style="left:0px;top:603px;width:1248px;height:1px;background:#d4d4d4;"></div><div style="left:0px;top:625px;width:1248px;height:1px;background:#d4d4d4;"></div><div style="left:0px;top:647px;width:1248px;height:1px;background:#d4d4d4;"></div><div style="left:0px;top:669px;width:1248px;height:1px;background:#d4d4d4;"></div><div style="left:0px;top:691px;width:1248px;height:1px;background:#d4d4d4;"></div><div style="left:0px;top:713px;width:1248px;height:1px;background:#d4d4d4;"></div><div style="left:0px;top:735px;width:1248px;height:1px;background:#d4d4d4;"></div><div style="left:0px;top:757px;width:1248px;height:1px;background:#d4d4d4;"></div><div style="left:0px;top:779px;width:1248px;height:1px;background:#d4d4d4;"></div><div style="left:0px;top:801px;width:1248px;height:1px;background:#d4d4d4;"></div><div style="left:0px;top:823px;width:1248px;height:1px;background:#d4d4d4;"></div><div style="left:0px;top:845px;width:1248px;height:1px;background:#d4d4d4;"></div><div style="left:0px;top:867px;width:1248px;height:1px;background:#d4d4d4;"></div><div style="left:0px;top:889px;width:1248px;height:1px;background:#d4d4d4;"></div><div style="left:0px;top:911px;width:1248px;height:1px;background:#d4d4d4;"></div><div style="left:0px;top:933px;width:1248px;height:1px;background:#d4d4d4;"></div><div style="left:137px;top:272px;width:1px;height:680px;background:#d4d4d4;"></div><div style="left:241px;top:272px;width:1px;height:680px;background:#d4d4d4;"></div><div style="left:345px;top:272px;width:1px;height:680px;background:#d4d4d4;"></div><div style="left:449px;top:272px;width:1px;height:680px;background:#d4d4d4;"></div><div style="left:553px;top:272px;width:1px;height:680px;background:#d4d4d4;"></div><div style="left:657px;top:272px;width:1px;height:680px;background:#d4d4d4;"></div><div style="left:761px;top:272px;width:1px;height:680px;background:#d4d4d4;"></div><div style="left:865px;top:272px;width:1px;height:680px;background:#d4d4d4;"></div><div style="left:969px;top:272px;width:1px;height:680px;background:#d4d4d4;"></div><div style="left:1073px;top:272px;width:1px;height:680px;background:#d4d4d4;"></div><div style="left:1177px;top:272px;width:1px;height:680px;background:#d4d4d4;"></div><div style="left:1281px;top:272px;width:1px;height:680px;background:#d4d4d4;"></div><div style="left:0px;top:294px;width:1249px;height:1px;background:#ababab;"></div><div style="left:33px;top:272px;width:1px;height:680px;background:#ababab;"></div><div style="left:1248px;top:294px;width:1px;height:658px;background:#ababab;"></div><svg style="left:17px;top:278px;" width="14" height="13" viewBox="0 0 14 13"><path d="M13.5 0V12.5H0Z" fill="#dadada"/></svg><div class="t" style="left:80.06px;top:276px;font-size:17px;transform:scaleX(0.9600);color:#444;">A</div><div class="t" style="left:184.06px;top:276px;font-size:17px;transform:scaleX(0.9600);color:#444;">B</div><div class="t" style="left:287.61px;top:276px;font-size:17px;transform:scaleX(0.9600);color:#444;">C</div><div class="t" style="left:391.61px;top:276px;font-size:17px;transform:scaleX(0.9600);color:#444;">D</div><div class="t" style="left:496.06px;top:276px;font-size:17px;transform:scaleX(0.9600);color:#444;">E</div><div class="t" style="left:600.51px;top:276px;font-size:17px;transform:scaleX(0.9600);color:#444;">F</div><div class="t" style="left:703.15px;top:276px;font-size:17px;transform:scaleX(0.9600);color:#444;">G</div><div class="t" style="left:807.61px;top:276px;font-size:17px;transform:scaleX(0.9600);color:#444;">H</div><div class="t" style="left:915.23px;top:276px;font-size:17px;transform:scaleX(0.9600);color:#444;">I</div><div class="t" style="left:1017.42px;top:276px;font-size:17px;transform:scaleX(0.9600);color:#444;">J</div><div class="t" style="left:1120.06px;top:276px;font-size:17px;transform:scaleX(0.9600);color:#444;">K</div><div class="t" style="left:1223.46px;top:276px;font-size:17px;transform:scaleX(0.9600);color:#444;">L</div><div class="t" style="left:11.56px;top:298px;font-size:17px;transform:scaleX(0.9600);color:#444;">1</div><div class="t" style="left:11.56px;top:320px;font-size:17px;transform:scaleX(0.9600);color:#444;">2</div><div class="t" style="left:11.56px;top:343px;font-size:17px;transform:scaleX(0.9600);color:#444;">3</div><div class="t" style="left:11.56px;top:365px;font-size:17px;transform:scaleX(0.9600);color:#444;">4</div><div class="t" style="left:11.56px;top:387px;font-size:17px;transform:scaleX(0.9600);color:#444;">5</div><div class="t" style="left:11.56px;top:409px;font-size:17px;transform:scaleX(0.9600);color:#444;">6</div><div class="t" style="left:11.56px;top:431px;font-size:17px;transform:scaleX(0.9600);color:#444;">7</div><div class="t" style="left:11.56px;top:453px;font-size:17px;transform:scaleX(0.9600);color:#444;">8</div><div class="t" style="left:11.56px;top:475px;font-size:17px;transform:scaleX(0.9600);color:#444;">9</div><div class="t" style="left:7.03px;top:497px;font-size:17px;transform:scaleX(0.9600);color:#444;">10</div><div class="t" style="left:7.63px;top:519px;font-size:17px;transform:scaleX(0.9600);color:#444;">11</div><div class="t" style="left:7.03px;top:541px;font-size:17px;transform:scaleX(0.9600);color:#444;">12</div><div class="t" style="left:7.03px;top:563px;font-size:17px;transform:scaleX(0.9600);color:#444;">13</div><div class="t" style="left:7.03px;top:585px;font-size:17px;transform:scaleX(0.9600);color:#444;">14</div><div class="t" style="left:7.03px;top:607px;font-size:17px;transform:scaleX(0.9600);color:#444;">15</div><div class="t" style="left:7.03px;top:629px;font-size:17px;transform:scaleX(0.9600);color:#444;">16</div><div class="t" style="left:7.03px;top:651px;font-size:17px;transform:scaleX(0.9600);color:#444;">17</div><div class="t" style="left:7.03px;top:673px;font-size:17px;transform:scaleX(0.9600);color:#444;">18</div><div class="t" style="left:7.03px;top:695px;font-size:17px;transform:scaleX(0.9600);color:#444;">19</div><div class="t" style="left:7.03px;top:717px;font-size:17px;transform:scaleX(0.9600);color:#444;">20</div><div class="t" style="left:7.03px;top:739px;font-size:17px;transform:scaleX(0.9600);color:#444;">21</div><div class="t" style="left:7.03px;top:761px;font-size:17px;transform:scaleX(0.9600);color:#444;">22</div><div class="t" style="left:7.03px;top:783px;font-size:17px;transform:scaleX(0.9600);color:#444;">23</div><div class="t" style="left:7.03px;top:805px;font-size:17px;transform:scaleX(0.9600);color:#444;">24</div><div class="t" style="left:7.03px;top:827px;font-size:17px;transform:scaleX(0.9600);color:#444;">25</div><div class="t" style="left:7.03px;top:849px;font-size:17px;transform:scaleX(0.9600);color:#444;">26</div><div class="t" style="left:7.03px;top:871px;font-size:17px;transform:scaleX(0.9600);color:#444;">27</div><div class="t" style="left:7.03px;top:893px;font-size:17px;transform:scaleX(0.9600);color:#444;">28</div><div class="t" style="left:7.03px;top:915px;font-size:17px;transform:scaleX(0.9600);color:#444;">29</div><div class="t" style="left:7.03px;top:937px;font-size:17px;transform:scaleX(0.9600);color:#444;">30</div><div style="left:242px;top:295px;width:623px;height:220px;background:#d8e4bc;"></div><div style="left:865px;top:295px;width:383px;height:220px;background:#fcd5b4;"></div><div style="left:33px;top:316px;width:1215px;height:1px;background:#000;"></div><div style="left:33px;top:338px;width:1215px;height:2px;background:#000;"></div><div style="left:33px;top:427px;width:1215px;height:1px;background:#000;"></div><div style="left:33px;top:515px;width:1215px;height:1px;background:#000;"></div><div style="left:0;top:0;width:1248px;height:952px;overflow:hidden;"><div class="t k" style="left:245px;top:298px;font-size:17px;font-style:italic;transform:scaleX(0.9600);color:#000;">Mean</div><div class="t k" style="left:349px;top:298px;font-size:17px;font-style:italic;transform:scaleX(0.9600);color:#000;">Mean</div><div class="t k" style="left:453px;top:298px;font-size:17px;font-style:italic;transform:scaleX(0.9600);color:#000;">Mean</div><div class="t k" style="left:557px;top:298px;font-size:17px;font-style:italic;transform:scaleX(0.9600);color:#000;">Mean</div><div class="t k" style="left:661px;top:298px;font-size:17px;font-style:italic;transform:scaleX(0.9600);color:#000;">Mean</div><div class="t k" style="left:765px;top:298px;font-size:17px;font-style:italic;transform:scaleX(0.9600);color:#000;">Mean</div><div class="t k" style="left:869px;top:298px;font-size:17px;font-style:italic;transform:scaleX(0.9600);color:#000;">SD</div><div class="t k" style="left:973px;top:298px;font-size:17px;font-style:italic;transform:scaleX(0.9600);color:#000;">SD</div><div class="t k" style="left:1077px;top:298px;font-size:17px;font-style:italic;transform:scaleX(0.9600);color:#000;">SD</div><div class="t k" style="left:1181px;top:298px;font-size:17px;font-style:italic;transform:scaleX(0.9600);color:#000;">SD</div><div class="t" style="left:37px;top:320px;font-size:17px;font-weight:bold;transform:scaleX(0.9600);color:#000;">Treatment</div><div class="t" style="left:141px;top:320px;font-size:17px;font-weight:bold;transform:scaleX(0.9600);color:#000;">Time</div><div class="t" style="left:250px;top:320px;font-size:17px;font-weight:bold;transform:scaleX(0.9600);color:#000;">subG1</div><div class="t" style="left:354px;top:320px;font-size:17px;font-weight:bold;transform:scaleX(0.9600);color:#000;">Casp3-A+</div><div class="t" style="left:458px;top:320px;font-size:17px;font-weight:bold;transform:scaleX(0.9600);color:#000;">G1_DJF</div><div class="t" style="left:562px;top:320px;font-size:17px;font-weight:bold;transform:scaleX(0.9600);color:#000;">S_DJF</div><div class="t" style="left:661px;top:320px;font-size:17px;font-weight:bold;transform:scaleX(0.9600);color:#000;">G2_DJF</div><div class="t" style="left:765px;top:320px;font-size:17px;font-weight:bold;transform:scaleX(0.9600);color:#000;">M</div><div class="t" style="left:874px;top:320px;font-size:17px;font-weight:bold;transform:scaleX(0.9600);color:#000;">subG1</div><div class="t" style="left:978px;top:320px;font-size:17px;font-weight:bold;transform:scaleX(0.9600);color:#000;">Casp3-A+</div><div class="t" style="left:1082px;top:320px;font-size:17px;font-weight:bold;transform:scaleX(0.9600);color:#000;">G1_DJF</div><div class="t" style="left:1186px;top:320px;font-size:17px;font-weight:bold;transform:scaleX(0.9600);color:#000;">S_DJF</div><div class="t k" style="left:37px;top:343px;font-size:17px;transform:scaleX(0.9600);color:#000;">Control1</div><div class="t k" style="left:141px;top:343px;font-size:17px;transform:scaleX(0.9600);color:#000;">1 h</div><div class="t k" style="left:310.24px;top:343px;font-size:17px;transform:scaleX(0.9600);color:#000;">0.00</div><div class="t k" style="left:414.24px;top:343px;font-size:17px;transform:scaleX(0.9600);color:#000;">0.00</div><div class="t k" style="left:509.16px;top:343px;font-size:17px;transform:scaleX(0.9600);color:#000;">48.05</div><div class="t k" style="left:613.16px;top:343px;font-size:17px;transform:scaleX(0.9600);color:#000;">37.04</div><div class="t k" style="left:717.16px;top:343px;font-size:17px;transform:scaleX(0.9600);color:#000;">12.98</div><div class="t k" style="left:830.24px;top:343px;font-size:17px;transform:scaleX(0.9600);color:#000;">1.93</div><div class="t k" style="left:934.24px;top:343px;font-size:17px;transform:scaleX(0.9600);color:#000;">0.00</div><div class="t k" style="left:1038.24px;top:343px;font-size:17px;transform:scaleX(0.9600);color:#000;">0.00</div><div class="t k" style="left:1142.24px;top:343px;font-size:17px;transform:scaleX(0.9600);color:#000;">0.00</div><div class="t k" style="left:1246.24px;top:343px;font-size:17px;transform:scaleX(0.9600);color:#000;">0.00</div><div class="t k" style="left:37px;top:365px;font-size:17px;transform:scaleX(0.9600);color:#000;">Treatment 1</div><div class="t k" style="left:141px;top:365px;font-size:17px;transform:scaleX(0.9600);color:#000;">1 h</div><div class="t k" style="left:304.8px;top:365px;font-size:17px;transform:scaleX(0.9600);color:#000;">-0.01</div><div class="t k" style="left:414.24px;top:365px;font-size:17px;transform:scaleX(0.9600);color:#000;">0.00</div><div class="t k" style="left:509.16px;top:365px;font-size:17px;transform:scaleX(0.9600);color:#000;">46.55</div><div class="t k" style="left:613.16px;top:365px;font-size:17px;transform:scaleX(0.9600);color:#000;">39.25</div><div class="t k" style="left:717.16px;top:365px;font-size:17px;transform:scaleX(0.9600);color:#000;">13.02</div><div class="t k" style="left:830.24px;top:365px;font-size:17px;transform:scaleX(0.9600);color:#000;">1.18</div><div class="t k" style="left:890.29px;top:365px;font-size:17px;transform:scaleX(0.9600);color:#000;">#DIV/0!</div><svg style="left:866px;top:362px;" width="7" height="7" viewBox="0 0 7 7"><path d="M0 0H6.5L0 6.5Z" fill="#0d8a0d"/></svg><div class="t k" style="left:994.29px;top:365px;font-size:17px;transform:scaleX(0.9600);color:#000;">#DIV/0!</div><svg style="left:970px;top:362px;" width="7" height="7" viewBox="0 0 7 7"><path d="M0 0H6.5L0 6.5Z" fill="#0d8a0d"/></svg><div class="t k" style="left:1098.29px;top:365px;font-size:17px;transform:scaleX(0.9600);color:#000;">#DIV/0!</div><svg style="left:1074px;top:362px;" width="7" height="7" viewBox="0 0 7 7"><path d="M0 0H6.5L0 6.5Z" fill="#0d8a0d"/></svg><div class="t k" style="left:1202.29px;top:365px;font-size:17px;transform:scaleX(0.9600);color:#000;">#DIV/0!</div><svg style="left:1178px;top:362px;" width="7" height="7" viewBox="0 0 7 7"><path d="M0 0H6.5L0 6.5Z" fill="#0d8a0d"/></svg><div class="t k" style="left:37px;top:387px;font-size:17px;transform:scaleX(0.9600);color:#000;">Control1</div><div class="t k" style="left:141px;top:387px;font-size:17px;transform:scaleX(0.9600);color:#000;">t2</div><div class="t k" style="left:266.29px;top:387px;font-size:17px;transform:scaleX(0.9600);color:#000;">#DIV/0!</div><svg style="left:242px;top:384px;" width="7" height="7" viewBox="0 0 7 7"><path d="M0 0H6.5L0 6.5Z" fill="#0d8a0d"/></svg><div class="t k" style="left:370.29px;top:387px;font-size:17px;transform:scaleX(0.9600);color:#000;">#DIV/0!</div><svg style="left:346px;top:384px;" width="7" height="7" viewBox="0 0 7 7"><path d="M0 0H6.5L0 6.5Z" fill="#0d8a0d"/></svg><div class="t k" style="left:474.29px;top:387px;font-size:17px;transform:scaleX(0.9600);color:#000;">#DIV/0!</div><svg style="left:450px;top:384px;" width="7" height="7" viewBox="0 0 7 7"><path d="M0 0H6.5L0 6.5Z" fill="#0d8a0d"/></svg><div class="t k" style="left:578.29px;top:387px;font-size:17px;transform:scaleX(0.9600);color:#000;">#DIV/0!</div><svg style="left:554px;top:384px;" width="7" height="7" viewBox="0 0 7 7"><path d="M0 0H6.5L0 6.5Z" fill="#0d8a0d"/></svg><div class="t k" style="left:682.29px;top:387px;font-size:17px;transform:scaleX(0.9600);color:#000;">#DIV/0!</div><svg style="left:658px;top:384px;" width="7" height="7" viewBox="0 0 7 7"><path d="M0 0H6.5L0 6.5Z" fill="#0d8a0d"/></svg><div class="t k" style="left:786.29px;top:387px;font-size:17px;transform:scaleX(0.9600);color:#000;">#DIV/0!</div><svg style="left:762px;top:384px;" width="7" height="7" viewBox="0 0 7 7"><path d="M0 0H6.5L0 6.5Z" fill="#0d8a0d"/></svg><div class="t k" style="left:890.29px;top:387px;font-size:17px;transform:scaleX(0.9600);color:#000;">#DIV/0!</div><svg style="left:866px;top:384px;" width="7" height="7" viewBox="0 0 7 7"><path d="M0 0H6.5L0 6.5Z" fill="#0d8a0d"/></svg><div class="t k" style="left:994.29px;top:387px;font-size:17px;transform:scaleX(0.9600);color:#000;">#DIV/0!</div><svg style="left:970px;top:384px;" width="7" height="7" viewBox="0 0 7 7"><path d="M0 0H6.5L0 6.5Z" fill="#0d8a0d"/></svg><div class="t k" style="left:1098.29px;top:387px;font-size:17px;transform:scaleX(0.9600);color:#000;">#DIV/0!</div><svg style="left:1074px;top:384px;" width="7" height="7" viewBox="0 0 7 7"><path d="M0 0H6.5L0 6.5Z" fill="#0d8a0d"/></svg><div class="t k" style="left:1202.29px;top:387px;font-size:17px;transform:scaleX(0.9600);color:#000;">#DIV/0!</div><svg style="left:1178px;top:384px;" width="7" height="7" viewBox="0 0 7 7"><path d="M0 0H6.5L0 6.5Z" fill="#0d8a0d"/></svg><div class="t k" style="left:37px;top:409px;font-size:17px;transform:scaleX(0.9600);color:#000;">Treatment 1</div><div class="t k" style="left:141px;top:409px;font-size:17px;transform:scaleX(0.9600);color:#000;">t2</div><div class="t k" style="left:266.29px;top:409px;font-size:17px;transform:scaleX(0.9600);color:#000;">#DIV/0!</div><svg style="left:242px;top:406px;" width="7" height="7" viewBox="0 0 7 7"><path d="M0 0H6.5L0 6.5Z" fill="#0d8a0d"/></svg><div class="t k" style="left:370.29px;top:409px;font-size:17px;transform:scaleX(0.9600);color:#000;">#DIV/0!</div><svg style="left:346px;top:406px;" width="7" height="7" viewBox="0 0 7 7"><path d="M0 0H6.5L0 6.5Z" fill="#0d8a0d"/></svg><div class="t k" style="left:474.29px;top:409px;font-size:17px;transform:scaleX(0.9600);color:#000;">#DIV/0!</div><svg style="left:450px;top:406px;" width="7" height="7" viewBox="0 0 7 7"><path d="M0 0H6.5L0 6.5Z" fill="#0d8a0d"/></svg><div class="t k" style="left:578.29px;top:409px;font-size:17px;transform:scaleX(0.9600);color:#000;">#DIV/0!</div><svg style="left:554px;top:406px;" width="7" height="7" viewBox="0 0 7 7"><path d="M0 0H6.5L0 6.5Z" fill="#0d8a0d"/></svg><div class="t k" style="left:682.29px;top:409px;font-size:17px;transform:scaleX(0.9600);color:#000;">#DIV/0!</div><svg style="left:658px;top:406px;" width="7" height="7" viewBox="0 0 7 7"><path d="M0 0H6.5L0 6.5Z" fill="#0d8a0d"/></svg><div class="t k" style="left:786.29px;top:409px;font-size:17px;transform:scaleX(0.9600);color:#000;">#DIV/0!</div><svg style="left:762px;top:406px;" width="7" height="7" viewBox="0 0 7 7"><path d="M0 0H6.5L0 6.5Z" fill="#0d8a0d"/></svg><div class="t k" style="left:890.29px;top:409px;font-size:17px;transform:scaleX(0.9600);color:#000;">#DIV/0!</div><svg style="left:866px;top:406px;" width="7" height="7" viewBox="0 0 7 7"><path d="M0 0H6.5L0 6.5Z" fill="#0d8a0d"/></svg><div class="t k" style="left:994.29px;top:409px;font-size:17px;transform:scaleX(0.9600);color:#000;">#DIV/0!</div><svg style="left:970px;top:406px;" width="7" height="7" viewBox="0 0 7 7"><path d="M0 0H6.5L0 6.5Z" fill="#0d8a0d"/></svg><div class="t k" style="left:1098.29px;top:409px;font-size:17px;transform:scaleX(0.9600);color:#000;">#DIV/0!</div><svg style="left:1074px;top:406px;" width="7" height="7" viewBox="0 0 7 7"><path d="M0 0H6.5L0 6.5Z" fill="#0d8a0d"/></svg><div class="t k" style="left:1202.29px;top:409px;font-size:17px;transform:scaleX(0.9600);color:#000;">#DIV/0!</div><svg style="left:1178px;top:406px;" width="7" height="7" viewBox="0 0 7 7"><path d="M0 0H6.5L0 6.5Z" fill="#0d8a0d"/></svg><div class="t k" style="left:37px;top:431px;font-size:17px;transform:scaleX(0.9600);color:#000;">Control2</div><div class="t k" style="left:141px;top:431px;font-size:17px;transform:scaleX(0.9600);color:#000;">t1</div><div class="t k" style="left:266.29px;top:431px;font-size:17px;transform:scaleX(0.9600);color:#000;">#DIV/0!</div><svg style="left:242px;top:428px;" width="7" height="7" viewBox="0 0 7 7"><path d="M0 0H6.5L0 6.5Z" fill="#0d8a0d"/></svg><div class="t k" style="left:408.8px;top:431px;font-size:17px;transform:scaleX(0.9600);color:#000;">-0.70</div><div class="t k" style="left:474.29px;top:431px;font-size:17px;transform:scaleX(0.9600);color:#000;">#DIV/0!</div><svg style="left:450px;top:428px;" width="7" height="7" viewBox="0 0 7 7"><path d="M0 0H6.5L0 6.5Z" fill="#0d8a0d"/></svg><div class="t k" style="left:578.29px;top:431px;font-size:17px;transform:scaleX(0.9600);color:#000;">#DIV/0!</div><svg style="left:554px;top:428px;" width="7" height="7" viewBox="0 0 7 7"><path d="M0 0H6.5L0 6.5Z" fill="#0d8a0d"/></svg><div class="t k" style="left:682.29px;top:431px;font-size:17px;transform:scaleX(0.9600);color:#000;">#DIV/0!</div><svg style="left:658px;top:428px;" width="7" height="7" viewBox="0 0 7 7"><path d="M0 0H6.5L0 6.5Z" fill="#0d8a0d"/></svg><div class="t k" style="left:786.29px;top:431px;font-size:17px;transform:scaleX(0.9600);color:#000;">#DIV/0!</div><svg style="left:762px;top:428px;" width="7" height="7" viewBox="0 0 7 7"><path d="M0 0H6.5L0 6.5Z" fill="#0d8a0d"/></svg><div class="t k" style="left:890.29px;top:431px;font-size:17px;transform:scaleX(0.9600);color:#000;">#DIV/0!</div><svg style="left:866px;top:428px;" width="7" height="7" viewBox="0 0 7 7"><path d="M0 0H6.5L0 6.5Z" fill="#0d8a0d"/></svg><div class="t k" style="left:1038.24px;top:431px;font-size:17px;transform:scaleX(0.9600);color:#000;">0.00</div><div class="t k" style="left:1098.29px;top:431px;font-size:17px;transform:scaleX(0.9600);color:#000;">#DIV/0!</div><svg style="left:1074px;top:428px;" width="7" height="7" viewBox="0 0 7 7"><path d="M0 0H6.5L0 6.5Z" fill="#0d8a0d"/></svg><div class="t k" style="left:1202.29px;top:431px;font-size:17px;transform:scaleX(0.9600);color:#000;">#DIV/0!</div><svg style="left:1178px;top:428px;" width="7" height="7" viewBox="0 0 7 7"><path d="M0 0H6.5L0 6.5Z" fill="#0d8a0d"/></svg><div class="t k" style="left:37px;top:453px;font-size:17px;transform:scaleX(0.9600);color:#000;">Treatment 2</div><div class="t k" style="left:141px;top:453px;font-size:17px;transform:scaleX(0.9600);color:#000;">t1</div><div class="t k" style="left:266.29px;top:453px;font-size:17px;transform:scaleX(0.9600);color:#000;">#DIV/0!</div><svg style="left:242px;top:450px;" width="7" height="7" viewBox="0 0 7 7"><path d="M0 0H6.5L0 6.5Z" fill="#0d8a0d"/></svg><div class="t k" style="left:408.8px;top:453px;font-size:17px;transform:scaleX(0.9600);color:#000;">-0.70</div><div class="t k" style="left:474.29px;top:453px;font-size:17px;transform:scaleX(0.9600);color:#000;">#DIV/0!</div><svg style="left:450px;top:450px;" width="7" height="7" viewBox="0 0 7 7"><path d="M0 0H6.5L0 6.5Z" fill="#0d8a0d"/></svg><div class="t k" style="left:578.29px;top:453px;font-size:17px;transform:scaleX(0.9600);color:#000;">#DIV/0!</div><svg style="left:554px;top:450px;" width="7" height="7" viewBox="0 0 7 7"><path d="M0 0H6.5L0 6.5Z" fill="#0d8a0d"/></svg><div class="t k" style="left:682.29px;top:453px;font-size:17px;transform:scaleX(0.9600);color:#000;">#DIV/0!</div><svg style="left:658px;top:450px;" width="7" height="7" viewBox="0 0 7 7"><path d="M0 0H6.5L0 6.5Z" fill="#0d8a0d"/></svg><div class="t k" style="left:786.29px;top:453px;font-size:17px;transform:scaleX(0.9600);color:#000;">#DIV/0!</div><svg style="left:762px;top:450px;" width="7" height="7" viewBox="0 0 7 7"><path d="M0 0H6.5L0 6.5Z" fill="#0d8a0d"/></svg><div class="t k" style="left:890.29px;top:453px;font-size:17px;transform:scaleX(0.9600);color:#000;">#DIV/0!</div><svg style="left:866px;top:450px;" width="7" height="7" viewBox="0 0 7 7"><path d="M0 0H6.5L0 6.5Z" fill="#0d8a0d"/></svg><div class="t k" style="left:1038.24px;top:453px;font-size:17px;transform:scaleX(0.9600);color:#000;">0.00</div><div class="t k" style="left:1098.29px;top:453px;font-size:17px;transform:scaleX(0.9600);color:#000;">#DIV/0!</div><svg style="left:1074px;top:450px;" width="7" height="7" viewBox="0 0 7 7"><path d="M0 0H6.5L0 6.5Z" fill="#0d8a0d"/></svg><div class="t k" style="left:1202.29px;top:453px;font-size:17px;transform:scaleX(0.9600);color:#000;">#DIV/0!</div><svg style="left:1178px;top:450px;" width="7" height="7" viewBox="0 0 7 7"><path d="M0 0H6.5L0 6.5Z" fill="#0d8a0d"/></svg><div class="t k" style="left:37px;top:475px;font-size:17px;transform:scaleX(0.9600);color:#000;">Control2</div><div class="t k" style="left:141px;top:475px;font-size:17px;transform:scaleX(0.9600);color:#000;">t2</div><div class="t k" style="left:266.29px;top:475px;font-size:17px;transform:scaleX(0.9600);color:#000;">#DIV/0!</div><svg style="left:242px;top:472px;" width="7" height="7" viewBox="0 0 7 7"><path d="M0 0H6.5L0 6.5Z" fill="#0d8a0d"/></svg><div class="t k" style="left:370.29px;top:475px;font-size:17px;transform:scaleX(0.9600);color:#000;">#DIV/0!</div><svg style="left:346px;top:472px;" width="7" height="7" viewBox="0 0 7 7"><path d="M0 0H6.5L0 6.5Z" fill="#0d8a0d"/></svg><div class="t k" style="left:474.29px;top:475px;font-size:17px;transform:scaleX(0.9600);color:#000;">#DIV/0!</div><svg style="left:450px;top:472px;" width="7" height="7" viewBox="0 0 7 7"><path d="M0 0H6.5L0 6.5Z" fill="#0d8a0d"/></svg><div class="t k" style="left:578.29px;top:475px;font-size:17px;transform:scaleX(0.9600);color:#000;">#DIV/0!</div><svg style="left:554px;top:472px;" width="7" height="7" viewBox="0 0 7 7"><path d="M0 0H6.5L0 6.5Z" fill="#0d8a0d"/></svg><div class="t k" style="left:682.29px;top:475px;font-size:17px;transform:scaleX(0.9600);color:#000;">#DIV/0!</div><svg style="left:658px;top:472px;" width="7" height="7" viewBox="0 0 7 7"><path d="M0 0H6.5L0 6.5Z" fill="#0d8a0d"/></svg><div class="t k" style="left:786.29px;top:475px;font-size:17px;transform:scaleX(0.9600);color:#000;">#DIV/0!</div><svg style="left:762px;top:472px;" width="7" height="7" viewBox="0 0 7 7"><path d="M0 0H6.5L0 6.5Z" fill="#0d8a0d"/></svg><div class="t k" style="left:890.29px;top:475px;font-size:17px;transform:scaleX(0.9600);color:#000;">#DIV/0!</div><svg style="left:866px;top:472px;" width="7" height="7" viewBox="0 0 7 7"><path d="M0 0H6.5L0 6.5Z" fill="#0d8a0d"/></svg><div class="t k" style="left:994.29px;top:475px;font-size:17px;transform:scaleX(0.9600);color:#000;">#DIV/0!</div><svg style="left:970px;top:472px;" width="7" height="7" viewBox="0 0 7 7"><path d="M0 0H6.5L0 6.5Z" fill="#0d8a0d"/></svg><div class="t k" style="left:1098.29px;top:475px;font-size:17px;transform:scaleX(0.9600);color:#000;">#DIV/0!</div><svg style="left:1074px;top:472px;" width="7" height="7" viewBox="0 0 7 7"><path d="M0 0H6.5L0 6.5Z" fill="#0d8a0d"/></svg><div class="t k" style="left:1202.29px;top:475px;font-size:17px;transform:scaleX(0.9600);color:#000;">#DIV/0!</div><svg style="left:1178px;top:472px;" width="7" height="7" viewBox="0 0 7 7"><path d="M0 0H6.5L0 6.5Z" fill="#0d8a0d"/></svg><div class="t k" style="left:37px;top:497px;font-size:17px;transform:scaleX(0.9600);color:#000;">Treatment 2</div><div class="t k" style="left:141px;top:497px;font-size:17px;transform:scaleX(0.9600);color:#000;">t2</div><div class="t k" style="left:266.29px;top:497px;font-size:17px;transform:scaleX(0.9600);color:#000;">#DIV/0!</div><svg style="left:242px;top:494px;" width="7" height="7" viewBox="0 0 7 7"><path d="M0 0H6.5L0 6.5Z" fill="#0d8a0d"/></svg><div class="t k" style="left:370.29px;top:497px;font-size:17px;transform:scaleX(0.9600);color:#000;">#DIV/0!</div><svg style="left:346px;top:494px;" width="7" height="7" viewBox="0 0 7 7"><path d="M0 0H6.5L0 6.5Z" fill="#0d8a0d"/></svg><div class="t k" style="left:474.29px;top:497px;font-size:17px;transform:scaleX(0.9600);color:#000;">#DIV/0!</div><svg style="left:450px;top:494px;" width="7" height="7" viewBox="0 0 7 7"><path d="M0 0H6.5L0 6.5Z" fill="#0d8a0d"/></svg><div class="t k" style="left:578.29px;top:497px;font-size:17px;transform:scaleX(0.9600);color:#000;">#DIV/0!</div><svg style="left:554px;top:494px;" width="7" height="7" viewBox="0 0 7 7"><path d="M0 0H6.5L0 6.5Z" fill="#0d8a0d"/></svg><div class="t k" style="left:682.29px;top:497px;font-size:17px;transform:scaleX(0.9600);color:#000;">#DIV/0!</div><svg style="left:658px;top:494px;" width="7" height="7" viewBox="0 0 7 7"><path d="M0 0H6.5L0 6.5Z" fill="#0d8a0d"/></svg><div class="t k" style="left:786.29px;top:497px;font-size:17px;transform:scaleX(0.9600);color:#000;">#DIV/0!</div><svg style="left:762px;top:494px;" width="7" height="7" viewBox="0 0 7 7"><path d="M0 0H6.5L0 6.5Z" fill="#0d8a0d"/></svg><div class="t k" style="left:890.29px;top:497px;font-size:17px;transform:scaleX(0.9600);color:#000;">#DIV/0!</div><svg style="left:866px;top:494px;" width="7" height="7" viewBox="0 0 7 7"><path d="M0 0H6.5L0 6.5Z" fill="#0d8a0d"/></svg><div class="t k" style="left:994.29px;top:497px;font-size:17px;transform:scaleX(0.9600);color:#000;">#DIV/0!</div><svg style="left:970px;top:494px;" width="7" height="7" viewBox="0 0 7 7"><path d="M0 0H6.5L0 6.5Z" fill="#0d8a0d"/></svg><div class="t k" style="left:1098.29px;top:497px;font-size:17px;transform:scaleX(0.9600);color:#000;">#DIV/0!</div><svg style="left:1074px;top:494px;" width="7" height="7" viewBox="0 0 7 7"><path d="M0 0H6.5L0 6.5Z" fill="#0d8a0d"/></svg><div class="t k" style="left:1202.29px;top:497px;font-size:17px;transform:scaleX(0.9600);color:#000;">#DIV/0!</div><svg style="left:1178px;top:494px;" width="7" height="7" viewBox="0 0 7 7"><path d="M0 0H6.5L0 6.5Z" fill="#0d8a0d"/></svg><div style="left:48px;top:536px;width:638px;height:410px;background:#fff;border:1px solid #d9d9d9;box-sizing:border-box;"></div><div class="t" style="left:205.85px;top:555px;font-size:20.4px;transform:scaleX(1.0496);color:#595959;">Cell cycle distribution Treatment 1</div><div class="t" style="left:94.52px;top:591px;font-size:13.5px;color:#595959;">60.00</div><div class="t" style="left:94.52px;top:636px;font-size:13.5px;color:#595959;">50.00</div><div class="t" style="left:94.52px;top:681px;font-size:13.5px;color:#595959;">40.00</div><div class="t" style="left:94.52px;top:726px;font-size:13.5px;color:#595959;">30.00</div><div class="t" style="left:94.52px;top:771px;font-size:13.5px;color:#595959;">20.00</div><div class="t" style="left:94.52px;top:816px;font-size:13.5px;color:#595959;">10.00</div><div class="t" style="left:102.03px;top:861px;font-size:13.5px;color:#595959;">0.00</div><svg style="left:140.5px;top:597px;" width="529" height="278.5" viewBox="0 0 529 278.5"><rect x="12.50" y="54.92" width="22.5" height="216.63" fill="#d9d9d9" stroke="#000" stroke-width="1.1"/><rect x="40.60" y="61.69" width="22.5" height="209.86" fill="#e6b9b8" stroke="#000" stroke-width="1.1"/><rect x="143.75" y="104.56" width="22.5" height="166.99" fill="#d9d9d9" stroke="#000" stroke-width="1.1"/><rect x="171.85" y="94.60" width="22.5" height="176.95" fill="#e6b9b8" stroke="#000" stroke-width="1.1"/><rect x="275.00" y="213.03" width="22.5" height="58.52" fill="#d9d9d9" stroke="#000" stroke-width="1.1"/><rect x="303.10" y="212.85" width="22.5" height="58.70" fill="#e6b9b8" stroke="#000" stroke-width="1.1"/><rect x="406.25" y="262.85" width="22.5" height="8.70" fill="#d9d9d9" stroke="#000" stroke-width="1.1"/><rect x="434.35" y="266.23" width="22.5" height="5.32" fill="#e6b9b8" stroke="#000" stroke-width="1.1"/><path d="M1 271.0V.5H526V271.0" fill="none" stroke="#000" stroke-width="1.3"/><path d="M0 271.2H527" stroke="#000" stroke-width="1.6"/><path d="M1.0 270.5v4.5" stroke="#000" stroke-width="1.3"/><path d="M132.2 270.5v4.5" stroke="#000" stroke-width="1.3"/><path d="M263.5 270.5v4.5" stroke="#000" stroke-width="1.3"/><path d="M394.8 270.5v4.5" stroke="#000" stroke-width="1.3"/><path d="M526.0 270.5v4.5" stroke="#000" stroke-width="1.3"/></svg><div class="t" style="left:185.88px;top:881px;font-size:13.5px;transform:scaleX(0.9053);color:#595959;">G1_DJF</div><div class="t" style="left:321.38px;top:881px;font-size:13.5px;transform:scaleX(0.8968);color:#595959;">S_DJF</div><div class="t" style="left:448.38px;top:881px;font-size:13.5px;transform:scaleX(0.9053);color:#595959;">G2_DJF</div><div class="t" style="left:596.75px;top:881px;font-size:13.5px;color:#595959;">M</div><div style="left:147px;top:916px;width:10px;height:10px;background:#d9d9d9;border:1px solid #000;box-sizing:border-box;"></div><div class="t" style="left:160px;top:914px;font-size:13.5px;transform:scaleX(1.0061);color:#595959;">Control1 1 h</div><div style="left:255px;top:916px;width:10px;height:10px;background:#e6b9b8;border:1px solid #000;box-sizing:border-box;"></div><div class="t" style="left:268.3px;top:914px;font-size:13.5px;transform:scaleX(1.0148);color:#595959;">Treatment 1 1 h</div><div style="left:385.5px;top:916px;width:10px;height:10px;background:#7f7f7f;border:1px solid #000;box-sizing:border-box;"></div><div class="t" style="left:398px;top:914px;font-size:13.5px;transform:scaleX(1.0190);color:#595959;">Control1 t2</div><div style="left:487px;top:916px;width:10px;height:10px;background:#c0504d;border:1px solid #000;box-sizing:border-box;"></div><div class="t" style="left:500px;top:914px;font-size:13.5px;transform:scaleX(1.0333);color:#595959;">Treatment 1 t2</div><div class="t" style="left:38.5px;top:724.3px;width:80px;height:16px;line-height:16px;text-align:center;font-size:13.8px;letter-spacing:0.25px;color:#595959;transform-origin:50% 50%;transform:rotate(-90deg);">% of cells</div><div style="left:702px;top:536px;width:660px;height:410px;background:#fff;border:1px solid #d9d9d9;box-sizing:border-box;"></div><div class="t" style="left:859.35px;top:555px;font-size:20.4px;transform:scaleX(1.0496);color:#595959;">Cell cycle distribution Treatment 2</div><div class="t" style="left:748.43px;top:591px;font-size:13.5px;color:#595959;">1.00</div><div class="t" style="left:748.43px;top:618px;font-size:13.5px;color:#595959;">0.90</div><div class="t" style="left:748.43px;top:645px;font-size:13.5px;color:#595959;">0.80</div><div class="t" style="left:748.43px;top:672px;font-size:13.5px;color:#595959;">0.70</div><div class="t" style="left:748.43px;top:699px;font-size:13.5px;color:#595959;">0.60</div><div class="t" style="left:748.43px;top:726px;font-size:13.5px;color:#595959;">0.50</div><div class="t" style="left:748.43px;top:753px;font-size:13.5px;color:#595959;">0.40</div><div class="t" style="left:748.43px;top:780px;font-size:13.5px;color:#595959;">0.30</div><div class="t" style="left:748.43px;top:807px;font-size:13.5px;color:#595959;">0.20</div><div class="t" style="left:748.43px;top:834px;font-size:13.5px;color:#595959;">0.10</div><div class="t" style="left:748.43px;top:861px;font-size:13.5px;color:#595959;">0.00</div><svg style="left:787.5px;top:597px;" width="536.4" height="278.5" viewBox="0 0 536.4 278.5"><path d="M1 271.0V.5H533.4V271.0" fill="none" stroke="#000" stroke-width="1.3"/><path d="M0 271.2H534.4" stroke="#000" stroke-width="1.6"/><path d="M1.0 270.5v4.5" stroke="#000" stroke-width="1.3"/><path d="M134.1 270.5v4.5" stroke="#000" stroke-width="1.3"/><path d="M267.2 270.5v4.5" stroke="#000" stroke-width="1.3"/><path d="M400.3 270.5v4.5" stroke="#000" stroke-width="1.3"/><path d="M533.4 270.5v4.5" stroke="#000" stroke-width="1.3"/></svg><div class="t" style="left:833.8px;top:881px;font-size:13.5px;transform:scaleX(0.9053);color:#595959;">G1_DJF</div><div class="t" style="left:971.15px;top:881px;font-size:13.5px;transform:scaleX(0.8968);color:#595959;">S_DJF</div><div class="t" style="left:1100px;top:881px;font-size:13.5px;transform:scaleX(0.9053);color:#595959;">G2_DJF</div><div class="t" style="left:1250.23px;top:881px;font-size:13.5px;color:#595959;">M</div><div style="left:809px;top:916px;width:10px;height:10px;background:#d9d9d9;border:1px solid #000;box-sizing:border-box;"></div><div class="t" style="left:821.5px;top:914px;font-size:13.5px;transform:scaleX(1.0190);color:#595959;">Control2 t1</div><div style="left:910px;top:916px;width:10px;height:10px;background:#b9cde5;border:1px solid #000;box-sizing:border-box;"></div><div class="t" style="left:922.3px;top:914px;font-size:13.5px;transform:scaleX(1.0391);color:#595959;">Treatment 2 t1</div><div style="left:1033px;top:916px;width:10px;height:10px;background:#7f7f7f;border:1px solid #000;box-sizing:border-box;"></div><div class="t" style="left:1045.8px;top:914px;font-size:13.5px;transform:scaleX(1.0206);color:#595959;">Control2 t2</div><div style="left:1134.3px;top:916px;width:10px;height:10px;background:#4f81bd;border:1px solid #000;box-sizing:border-box;"></div><div class="t" style="left:1146.6px;top:914px;font-size:13.5px;transform:scaleX(1.0402);color:#595959;">Treatment 2 t2</div><div class="t" style="left:693.3px;top:724.3px;width:80px;height:16px;line-height:16px;text-align:center;font-size:13.8px;letter-spacing:0.25px;color:#595959;transform-origin:50% 50%;transform:rotate(-90deg);">% of cells</div></div><div style="left:0px;top:952px;width:1249px;height:1px;background:#ababab;"></div><div style="left:0px;top:953px;width:1274px;height:28px;background:#f3f3f3;"></div><svg style="left:26.5px;top:961px;" width="40" height="12" viewBox="0 0 40 12"><path d="M5.5 0.5L0.5 5.5L5.5 10.5ZM29.5 0.5l5 5-5 5Z" fill="#c8c8c8"/></svg><div style="left:102px;top:956px;width:1px;height:21px;background:#ababab;"></div><div style="left:201px;top:956px;width:1px;height:21px;background:#ababab;"></div><div style="left:599px;top:956px;width:1px;height:21px;background:#ababab;"></div><div class="t" style="left:116.5px;top:957px;font-size:16px;transform:scaleX(1.0207);color:#444;">Raw data</div><div class="t" style="left:215.5px;top:957px;font-size:16px;transform:scaleX(1.0533);color:#444;">Corrected</div><div style="left:304px;top:952px;width:216px;height:27px;background:#fff;"></div><div style="left:304px;top:952px;width:1px;height:26px;background:#ababab;"></div><div style="left:519px;top:952px;width:1px;height:26px;background:#ababab;"></div><div style="left:304px;top:976px;width:216px;height:2px;background:#217346;"></div><div class="t" style="left:316.4px;top:955px;font-size:17px;font-weight:bold;transform:scaleX(0.9602);color:#217346;">Cell cycle and apoptosis</div><div class="t" style="left:533px;top:957px;font-size:16px;transform:scaleX(1.0259);color:#444;">gH2AX</div><svg style="left:632px;top:956.5px;" width="20" height="20" viewBox="0 0 20 20"><circle cx="10" cy="10" r="9" fill="none" stroke="#777" stroke-width="1.3"/><path d="M5.5 10h9M10 5.5v9" stroke="#666" stroke-width="1.6"/></svg><svg style="left:853px;top:960px;" width="3" height="14" viewBox="0 0 3 14"><rect x="0" y="2" width="2" height="2" fill="#999"/><rect x="0" y="6" width="2" height="2" fill="#999"/><rect x="0" y="10" width="2" height="2" fill="#999"/></svg><div style="left:871px;top:957px;width:378px;height:19px;background:#e4e4e4;"></div><div style="left:871px;top:957px;width:19px;height:19px;background:#fff;border:1px solid #c6c6c6;box-sizing:border-box;"></div><svg style="left:877px;top:961.5px;" width="6" height="10" viewBox="0 0 6 10"><path d="M5.5 0L0 4.8L5.5 9.6Z" fill="#777"/></svg><div style="left:1230px;top:957px;width:19px;height:19px;background:#fff;border:1px solid #c6c6c6;box-sizing:border-box;"></div><svg style="left:1237px;top:961.5px;" width="6" height="10" viewBox="0 0 6 10"><path d="M0 0L5.5 4.8L0 9.6Z" fill="#777"/></svg><div style="left:890px;top:957px;width:187px;height:19px;background:#fff;border:1px solid #ababab;box-sizing:border-box;"></div><div style="left:1252px;top:228px;width:19px;height:725px;background:#f6f6f6;"></div><div style="left:1252px;top:228px;width:19px;height:19px;background:#fff;border:1px solid #c6c6c6;box-sizing:border-box;"></div><svg style="left:1257px;top:235px;" width="10" height="6" viewBox="0 0 10 6"><path d="M0 5.5L4.7 0L9.4 5.5Z" fill="#777"/></svg><div style="left:1252px;top:934px;width:19px;height:19px;background:#fff;border:1px solid #c6c6c6;box-sizing:border-box;"></div><svg style="left:1257px;top:941px;" width="10" height="6" viewBox="0 0 10 6"><path d="M0 0L4.7 5.5L9.4 0Z" fill="#777"/></svg><div style="left:1252px;top:247px;width:19px;height:621px;background:#fff;border:1px solid #b9b9b9;box-sizing:border-box;"></div><div style="left:0px;top:981px;width:1275px;height:27px;background:#217346;"></div><div class="t" style="left:6.3px;top:989px;font-size:12.6px;transform:scaleX(0.8350);color:#fff;">BEREIT</div><div style="left:919.5px;top:981px;width:40.5px;height:27px;background:#0f6937;"></div><svg style="left:-3px;top:981px;" width="1277" height="27" viewBox="0 0 1277 27"><g fill="none" stroke="#fff" stroke-width="1.2"><rect x="935.6" y="6.6" width="12" height="12"/><path d="M939.6 6.6v12M943.6 6.6v12M935.6 10.6h12M935.6 14.6h12"/><rect x="976.6" y="6.6" width="13" height="12"/><rect x="979.6" y="9.2" width="7" height="7"/><path d="M981 11.5h4.2M981 14h4.2"/><rect x="1017.6" y="6.6" width="13" height="12"/></g><rect x="1018" y="7" width="3.4" height="6.5" fill="#fff"/><rect x="1022.6" y="7" width="3.6" height="4.5" fill="#fff"/><path d="M1022 7v6.6" stroke="#0f6937" stroke-width=".8"/><rect x="1050" y="12" width="9" height="2" fill="#fff"/><rect x="1063" y="12.6" width="125" height="1" fill="#fff"/><rect x="1123" y="6" width="5" height="17" fill="#fff"/><rect x="1192" y="12" width="12" height="2" fill="#fff"/><rect x="1197" y="7" width="2" height="12" fill="#fff"/></svg><div class="t" style="left:1217px;top:989px;font-size:12.6px;transform:scaleX(0.9518);color:#fff;">100 %</div></div><div style="left:0;top:64px;width:1px;height:917px;background:#b9b9b9"></div><div style="left:1275px;top:0;width:1px;height:1008px;background:#8a8a8a"></div></div>
</body></html>
